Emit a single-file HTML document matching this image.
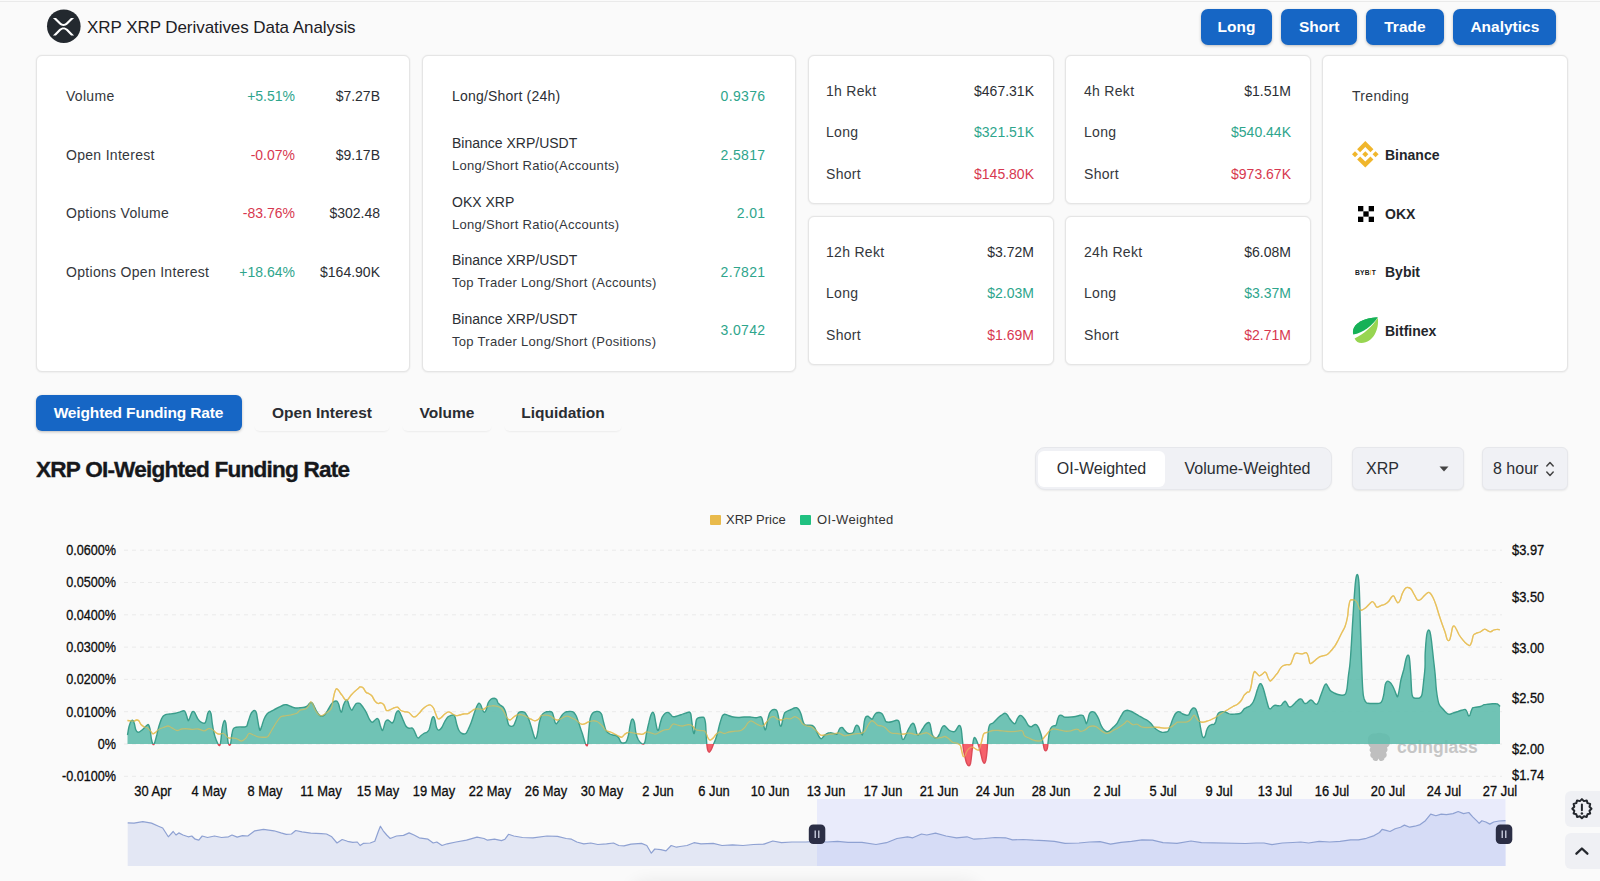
<!DOCTYPE html>
<html lang="en">
<head>
<meta charset="utf-8">
<title>XRP Derivatives Data Analysis</title>
<style>
*{box-sizing:border-box;margin:0;padding:0}
html,body{width:1600px;height:881px;overflow:hidden;background:#fafafa}
body{position:relative;font-family:"Liberation Sans",Arial,sans-serif;color:#23262b;font-size:14px}
.abs{position:absolute}
.t{position:absolute;white-space:nowrap;line-height:20px;height:20px;font-size:14px;color:#2b2e33}
.r{text-align:right}
.g{color:#2ea58c}
.rd{color:#d7384f}
.card{position:absolute;background:#fff;border:1px solid #e5e5e5;border-radius:6px;box-shadow:0 0 2px rgba(0,0,0,.07),0 1px 2px rgba(0,0,0,.03)}
.btn{position:absolute;top:8.5px;height:36px;border-radius:7px;background:#1666c5;color:#fff;font-weight:700;font-size:15.5px;line-height:36px;text-align:center;box-shadow:0 1px 3px rgba(0,0,0,.25)}
.s{font-size:13px;color:#3d4046}
.b{font-weight:700;font-size:14px;color:#23262b}
.w{letter-spacing:.3px;color:#34373c}
.w2{letter-spacing:.2px}
.tab{position:absolute;top:395px;height:36px;line-height:36px;text-align:center;font-weight:700;font-size:15.5px;color:#2a2d32;border-radius:6px;box-shadow:0 2px 2px -1px rgba(0,0,0,.06)}
.ax{position:absolute;white-space:nowrap;font-size:14px;line-height:16px;height:16px;color:#0d0d0d;-webkit-text-stroke:.3px #0d0d0d}
</style>
</head>
<body>
<div class="abs" style="left:0;top:.5px;width:1600px;height:1.8px;background:#eaeaea"></div>
<!-- header -->
<svg class="abs" style="left:46px;top:9px" width="35" height="35" viewBox="0 0 35 35"><circle cx="17.8" cy="17.2" r="16.8" fill="#23292f"/><g transform="translate(6.900 8.900) scale(.0414)" fill="#fff"><path d="M437 0h74L357 152.480c-55.770 55.190-146.190 55.190-202 0L.94 0H75L192 115.830a91.110 91.110 0 0 0 127.910 0z"/><path d="M74.050 424H0L155 270.580c55.770-55.190 146.190-55.190 202 0L512 424H438L320 307.230a91.110 91.110 0 0 0-127.910 0z"/></g></svg>
<div class="t" id="title" style="left:87px;top:17.7px;font-size:17px;color:#1d2025;letter-spacing:-.06px">XRP XRP Derivatives Data Analysis</div>
<div class="btn" style="left:1201px;width:71px">Long</div>
<div class="btn" style="left:1281.3px;width:75.7px">Short</div>
<div class="btn" style="left:1366.2px;width:77.5px">Trade</div>
<div class="btn" style="left:1453.2px;width:103.3px">Analytics</div>

<!-- card 1 -->
<div class="card" style="left:36px;top:55px;width:374px;height:317px"></div>
<div class="t w" style="left:66px;top:86px">Volume</div>
<div class="t r g" style="left:195px;width:100px;top:86px">+5.51%</div>
<div class="t r" style="left:280px;width:100px;top:86px">$7.27B</div>
<div class="t w" style="left:66px;top:145px">Open Interest</div>
<div class="t r rd" style="left:195px;width:100px;top:145px">-0.07%</div>
<div class="t r" style="left:280px;width:100px;top:145px">$9.17B</div>
<div class="t w" style="left:66px;top:203px">Options Volume</div>
<div class="t r rd" style="left:195px;width:100px;top:203px">-83.76%</div>
<div class="t r" style="left:280px;width:100px;top:203px">$302.48</div>
<div class="t w" style="left:66px;top:262px">Options Open Interest</div>
<div class="t r g" style="left:195px;width:100px;top:262px">+18.64%</div>
<div class="t r" style="left:280px;width:100px;top:262px">$164.90K</div>

<!-- card 2 -->
<div class="card" style="left:422px;top:55px;width:374px;height:317px"></div>
<div class="t w2" style="left:452px;top:86px">Long/Short (24h)</div>
<div class="t r g" style="left:666px;width:100px;top:86px;letter-spacing:.35px;margin-left:-.5px">0.9376</div>
<div class="t" style="left:452px;top:133px">Binance XRP/USDT</div>
<div class="t s w" style="left:452px;top:156px">Long/Short Ratio(Accounts)</div>
<div class="t r g" style="left:666px;width:100px;top:145px;letter-spacing:.35px;margin-left:-.5px">2.5817</div>
<div class="t" style="left:452px;top:192px">OKX XRP</div>
<div class="t s w" style="left:452px;top:215px">Long/Short Ratio(Accounts)</div>
<div class="t r g" style="left:666px;width:100px;top:203px;letter-spacing:.35px;margin-left:-.5px">2.01</div>
<div class="t" style="left:452px;top:250px">Binance XRP/USDT</div>
<div class="t s w" style="left:452px;top:273px">Top Trader Long/Short (Accounts)</div>
<div class="t r g" style="left:666px;width:100px;top:262px;letter-spacing:.35px;margin-left:-.5px">2.7821</div>
<div class="t" style="left:452px;top:309px">Binance XRP/USDT</div>
<div class="t s w" style="left:452px;top:332px">Top Trader Long/Short (Positions)</div>
<div class="t r g" style="left:666px;width:100px;top:320px;letter-spacing:.35px;margin-left:-.5px">3.0742</div>

<!-- rekt cards -->
<div class="card" style="left:808px;top:55px;width:246px;height:149px"></div>
<div class="t w" style="left:826px;top:80.5px">1h Rekt</div><div class="t r" style="left:934px;width:100px;top:80.5px">$467.31K</div>
<div class="t w" style="left:826px;top:122px">Long</div><div class="t r g" style="left:934px;width:100px;top:122px">$321.51K</div>
<div class="t w" style="left:826px;top:164px">Short</div><div class="t r rd" style="left:934px;width:100px;top:164px">$145.80K</div>

<div class="card" style="left:1065px;top:55px;width:246px;height:149px"></div>
<div class="t w" style="left:1084px;top:80.5px">4h Rekt</div><div class="t r" style="left:1191px;width:100px;top:80.5px">$1.51M</div>
<div class="t w" style="left:1084px;top:122px">Long</div><div class="t r g" style="left:1191px;width:100px;top:122px">$540.44K</div>
<div class="t w" style="left:1084px;top:164px">Short</div><div class="t r rd" style="left:1191px;width:100px;top:164px">$973.67K</div>

<div class="card" style="left:808px;top:216px;width:246px;height:149px"></div>
<div class="t w" style="left:826px;top:241.5px">12h Rekt</div><div class="t r" style="left:934px;width:100px;top:241.5px">$3.72M</div>
<div class="t w" style="left:826px;top:283px">Long</div><div class="t r g" style="left:934px;width:100px;top:283px">$2.03M</div>
<div class="t w" style="left:826px;top:325px">Short</div><div class="t r rd" style="left:934px;width:100px;top:325px">$1.69M</div>

<div class="card" style="left:1065px;top:216px;width:246px;height:149px"></div>
<div class="t w" style="left:1084px;top:241.5px">24h Rekt</div><div class="t r" style="left:1191px;width:100px;top:241.5px">$6.08M</div>
<div class="t w" style="left:1084px;top:283px">Long</div><div class="t r g" style="left:1191px;width:100px;top:283px">$3.37M</div>
<div class="t w" style="left:1084px;top:325px">Short</div><div class="t r rd" style="left:1191px;width:100px;top:325px">$2.71M</div>

<!-- trending -->
<div class="card" style="left:1322px;top:55px;width:246px;height:317px"></div>
<div class="t w" style="left:1352px;top:86px">Trending</div>
<svg class="abs" style="left:1352.2px;top:141.4px" width="26.6" height="26.6" viewBox="0 0 126.61 126.61"><g fill="#f0b62c"><path d="M38.73 53.2 63.31 28.62 87.9 53.21 102.2 38.91 63.31 0 24.43 38.9z"/><path d="M0 63.31 14.3 49 28.6 63.31 14.3 77.61z"/><path d="M38.73 73.41 63.31 98 87.9 73.4 102.21 87.69 63.31 126.61 24.43 87.73z"/><path d="M98.01 63.31 112.31 49 126.61 63.31 112.31 77.61z"/><path d="M77.82 63.3 63.31 48.78 48.8 63.28 63.31 77.82z"/></g></svg>
<div class="t b" style="left:1385px;top:145px">Binance</div>
<svg class="abs" style="left:1358px;top:206px" width="16" height="16" viewBox="0 0 15 15"><g fill="#000"><rect x="0" y="0" width="5" height="5"/><rect x="10" y="0" width="5" height="5"/><rect x="5" y="5" width="5" height="5"/><rect x="0" y="10" width="5" height="5"/><rect x="10" y="10" width="5" height="5"/></g></svg>
<div class="t b" style="left:1385px;top:203.5px">OKX</div>
<div class="t" style="left:1355px;top:263px;font-size:7.8px;font-weight:700;letter-spacing:.2px;color:#16181c;transform:scaleX(.86);transform-origin:0 50%">BYB<span style="color:#f7a600;font-weight:400">I</span>T</div>
<div class="t b" style="left:1385px;top:262px">Bybit</div>
<svg class="abs" style="left:1352px;top:316px" width="28" height="28" viewBox="0 0 28 28"><path d="M1 14.5 C2.5 7 12 1.6 25.8 1.2 C19 5 9 12 1 14.5 Z" fill="#16b157"/><path d="M2.6 22.4 C11 19 21 10 25.8 1.8 C27.4 13 21.5 26.8 9.4 27 C6.4 27 4 25.4 2.6 22.4 Z" fill="#97d551"/><path d="M1 14.5 C2.5 7 12 1.6 25.8 1.2 C21 9 11 17 1.2 18.6 C0.9 17.2 0.8 15.8 1 14.5 Z" fill="#16b157"/></svg>
<div class="t b" style="left:1385px;top:321px">Bitfinex</div>
<!-- tabs -->
<div class="tab" style="left:35.500px;width:206px;background:#1666c5;color:#fff;letter-spacing:-.15px;box-shadow:0 1px 3px rgba(0,0,0,.25)">Weighted Funding Rate</div>
<div class="tab" style="left:254px;width:136px">Open Interest</div>
<div class="tab" style="left:402px;width:90px">Volume</div>
<div class="tab" style="left:504px;width:118px">Liquidation</div>

<div class="t" id="ctitle" style="left:36px;top:456.2px;height:28px;line-height:28px;font-size:22.6px;font-weight:700;color:#16181c;letter-spacing:-.8px;-webkit-text-stroke:.35px #16181c">XRP OI-Weighted Funding Rate</div>

<!-- toggle group -->
<div class="abs" style="left:1035px;top:447px;width:297px;height:43px;border-radius:10px;background:#f0f1f5;border:1px solid #e6e7eb;box-shadow:0 1px 2px rgba(0,0,0,.06)"></div>
<div class="abs" style="left:1038px;top:451px;width:127px;height:36px;border-radius:6px;background:#fff"></div>
<div class="t" style="left:1038px;width:127px;top:459px;text-align:center;font-size:16px;color:#2b2e33">OI-Weighted</div>
<div class="t" style="left:1165px;width:165px;top:459px;text-align:center;font-size:16px;color:#2b2e33">Volume-Weighted</div>
<div class="abs" style="left:1352px;top:447px;width:112px;height:43px;border-radius:6px;background:#f0f1f5;border:1px solid #e6e7eb;box-shadow:0 1px 2px rgba(0,0,0,.08)"></div>
<div class="t" style="left:1366px;top:459px;font-size:16px;color:#2b2e33">XRP</div>
<svg class="abs" style="left:1439px;top:466px" width="10" height="6" viewBox="0 0 10 6"><path d="M0.5 0.5 L9.5 0.5 L5 5.5 Z" fill="#444"/></svg>
<div class="abs" style="left:1482px;top:447px;width:86px;height:43px;border-radius:6px;background:#f0f1f5;border:1px solid #e6e7eb;box-shadow:0 1px 2px rgba(0,0,0,.08)"></div>
<div class="t" style="left:1493px;top:459px;font-size:16px;color:#2b2e33">8 hour</div>
<svg class="abs" style="left:1545px;top:460px" width="10" height="18" viewBox="0 0 10 18"><path d="M1.8 6 L5 2.6 L8.2 6 M1.8 12 L5 15.4 L8.2 12" fill="none" stroke="#444" stroke-width="1.5" stroke-linecap="round" stroke-linejoin="round"/></svg>

<!-- legend -->
<div class="abs" style="left:709.700px;top:514.700px;width:11px;height:10.500px;background:#e9ba4b;border-radius:1px"></div>
<div class="t" style="left:726px;top:509.900px;font-size:13px;color:#333">XRP Price</div>
<div class="abs" style="left:800px;top:514.700px;width:11px;height:10.500px;background:#20c080;border-radius:1px"></div>
<div class="t" style="left:817px;top:509.900px;font-size:13px;color:#333;letter-spacing:.35px">OI-Weighted</div>
<svg class="abs" style="left:0;top:0" width="1600" height="881" viewBox="0 0 1600 881">
<defs><clipPath id="cu"><rect x="0" y="500" width="1600" height="244.0"/></clipPath><clipPath id="cd"><rect x="0" y="744.0" width="1600" height="100"/></clipPath></defs>
<line x1="124" x2="1502" y1="550.2" y2="550.2" stroke="#eaeaea" stroke-width="1" stroke-dasharray="4 4"/>
<line x1="124" x2="1502" y1="582.5" y2="582.5" stroke="#eaeaea" stroke-width="1" stroke-dasharray="4 4"/>
<line x1="124" x2="1502" y1="614.8" y2="614.8" stroke="#eaeaea" stroke-width="1" stroke-dasharray="4 4"/>
<line x1="124" x2="1502" y1="647.1" y2="647.1" stroke="#eaeaea" stroke-width="1" stroke-dasharray="4 4"/>
<line x1="124" x2="1502" y1="679.4" y2="679.4" stroke="#eaeaea" stroke-width="1" stroke-dasharray="4 4"/>
<line x1="124" x2="1502" y1="711.7" y2="711.7" stroke="#eaeaea" stroke-width="1" stroke-dasharray="4 4"/>
<line x1="124" x2="1502" y1="744.0" y2="744.0" stroke="#eaeaea" stroke-width="1" stroke-dasharray="4 4"/>
<line x1="124" x2="1502" y1="776.3" y2="776.3" stroke="#eaeaea" stroke-width="1" stroke-dasharray="4 4"/>
<g><path d="M1368 739C1368 735 1372 733 1376 733.5C1378 732.5 1381 732.5 1383 733.5C1387 733.5 1390.5 736 1390 740C1390.5 744 1389 746.5 1387 747.5C1388 749.500 1387.500 751.500 1386 752.500C1387.500 755 1386.500 757.500 1384.500 758C1384.500 760.500 1381.500 762 1379.500 760.500L1378.500 758.500L1377.500 760.500C1375.500 762 1372.500 760.500 1372.500 758C1370.500 757.500 1369.500 755 1371 752.500C1369.500 751.500 1369 749.500 1370.500 747.500C1368.500 746 1367.500 743 1368 739Z" fill="#bfbfbf"/><text x="1397" y="752.5" font-family="Liberation Sans,Arial,sans-serif" font-weight="700" font-size="17.5" fill="#c6c6c6">coinglass</text></g>
<defs><path id="yp" d="M127.5 720.5C128.0 720.5 129.5 720.6 130.5 720.8C131.5 720.9 132.5 721.3 133.5 721.2C134.5 721.1 135.6 720.1 136.5 720.0C137.4 719.9 138.0 720.0 138.8 720.8C139.5 721.5 140.1 723.5 141.0 724.5C141.9 725.5 143.0 726.2 144.0 726.8C145.0 727.2 146.0 726.9 147.0 727.5C148.0 728.1 149.0 729.5 150.0 730.5C151.0 731.5 152.0 733.5 153.0 733.8C154.0 734.0 155.0 732.8 156.0 732.0C157.0 731.2 157.8 730.0 159.0 729.3C160.2 728.5 162.0 728.0 163.5 727.5C165.0 727.0 166.6 726.0 168.0 726.0C169.4 726.0 170.2 727.0 171.8 727.8C173.2 728.5 175.4 730.3 177.0 730.5C178.6 730.7 180.0 729.3 181.5 729.0C183.0 728.7 184.2 728.7 186.0 728.7C187.8 728.8 190.0 729.2 192.0 729.3C194.0 729.3 196.0 728.8 198.0 729.0C200.0 729.2 202.2 730.8 204.0 730.8C205.8 730.8 207.2 729.0 208.5 728.7C209.8 728.4 210.2 728.3 211.5 729.0C212.8 729.7 214.8 731.9 216.0 732.8C217.2 733.6 217.8 734.1 219.0 734.2C220.2 734.4 222.0 732.9 223.5 733.5C225.0 734.1 226.5 737.0 228.0 737.7C229.5 738.5 231.0 737.8 232.5 738.0C234.0 738.2 235.5 738.2 237.0 738.8C238.5 739.2 240.0 741.1 241.5 741.0C243.0 740.9 244.8 739.2 246.0 738.0C247.2 736.8 247.8 734.0 249.0 733.5C250.2 733.0 252.0 734.5 253.5 735.0C255.0 735.5 256.2 736.4 258.0 736.8C259.8 737.2 262.4 737.3 264.0 737.2C265.6 737.2 266.5 737.6 267.8 736.5C269.0 735.4 270.1 732.8 271.5 730.5C272.9 728.2 274.5 725.2 276.0 723.0C277.5 720.8 279.0 718.2 280.5 717.0C282.0 715.8 283.2 716.2 285.0 715.8C286.8 715.4 289.0 715.2 291.0 714.8C293.0 714.3 295.5 714.0 297.0 713.2C298.5 712.5 298.5 711.0 300.0 710.2C301.5 709.5 304.5 709.6 306.0 708.8C307.5 707.9 308.2 706.1 309.0 705.0C309.8 703.9 310.2 702.1 310.8 702.0C311.4 701.9 312.1 703.0 312.8 704.2C313.4 705.5 314.1 707.9 315.0 709.5C315.9 711.1 316.9 713.0 318.0 714.0C319.1 715.0 320.2 716.0 321.8 715.8C323.2 715.5 325.4 713.8 327.0 712.5C328.6 711.2 330.4 710.8 331.5 708.0C332.6 705.2 333.0 699.1 333.8 696.0C334.5 692.9 335.2 690.2 336.0 689.2C336.8 688.2 337.2 689.0 338.2 690.0C339.2 691.0 340.6 693.5 342.0 695.2C343.4 697.0 345.0 700.5 346.5 700.5C348.0 700.5 349.5 696.9 351.0 695.2C352.5 693.6 354.2 691.9 355.5 690.8C356.8 689.6 357.8 688.8 358.5 688.2C359.2 687.6 359.2 687.1 360.0 687.0C360.8 686.9 362.0 686.9 363.0 687.8C364.0 688.6 365.0 691.2 366.0 692.2C367.0 693.2 368.0 693.1 369.0 693.8C370.0 694.4 371.0 694.8 372.0 696.0C373.0 697.2 374.0 700.0 375.0 701.2C376.0 702.5 377.0 703.2 378.0 703.5C379.0 703.8 380.0 702.5 381.0 702.8C382.0 703.0 383.1 703.8 384.0 705.0C384.9 706.2 385.4 709.4 386.2 710.2C387.1 711.1 388.1 710.6 389.2 710.2C390.4 709.9 391.6 708.8 393.0 708.3C394.4 707.8 396.2 706.9 397.5 707.2C398.8 707.6 399.2 709.5 400.5 710.2C401.8 711.0 403.6 711.4 405.0 711.8C406.4 712.1 407.5 711.8 408.8 712.5C410.0 713.2 411.4 715.5 412.5 716.2C413.6 717.0 414.4 717.2 415.5 716.7C416.6 716.2 418.0 714.6 419.2 713.2C420.5 711.9 421.6 710.0 423.0 708.8C424.4 707.5 426.2 706.1 427.5 705.5C428.8 704.8 429.5 704.6 430.5 705.0C431.5 705.4 432.6 706.5 433.5 708.0C434.4 709.5 435.0 712.2 435.8 714.0C436.5 715.8 437.1 718.2 438.0 718.8C438.9 719.4 439.9 718.5 441.0 717.8C442.1 717.0 443.5 715.0 444.8 714.0C446.0 713.0 447.4 711.9 448.5 711.8C449.6 711.6 450.4 712.6 451.5 713.2C452.6 713.9 454.0 715.2 455.2 715.5C456.5 715.8 457.6 715.5 459.0 715.2C460.4 715.0 462.0 714.2 463.5 714.0C465.0 713.8 466.6 714.2 468.0 713.7C469.4 713.2 470.6 711.8 471.8 711.0C472.9 710.2 473.6 709.6 474.8 709.2C475.9 708.8 477.1 708.7 478.5 708.8C479.9 708.8 481.5 709.9 483.0 709.5C484.5 709.1 486.0 707.1 487.5 706.5C489.0 705.9 490.5 705.8 492.0 705.8C493.5 705.7 495.0 705.8 496.5 706.2C498.0 706.6 499.8 707.1 501.0 708.0C502.2 708.9 503.0 710.1 504.0 711.8C505.0 713.4 506.0 716.4 507.0 717.8C508.0 719.1 508.9 720.1 510.0 720.0C511.1 719.9 512.5 717.9 513.8 717.0C515.0 716.1 516.1 715.1 517.5 714.8C518.9 714.4 520.5 714.4 522.0 714.8C523.5 715.1 525.0 716.0 526.5 716.7C528.0 717.5 529.6 718.6 531.0 719.2C532.4 719.9 533.5 720.8 534.8 720.8C536.0 720.8 537.4 720.1 538.5 719.2C539.6 718.4 540.2 716.2 541.5 715.5C542.8 714.8 544.5 715.1 546.0 715.2C547.5 715.3 549.0 715.6 550.5 716.2C552.0 716.9 553.8 718.6 555.0 719.2C556.2 719.9 556.8 720.2 558.0 720.0C559.2 719.8 561.0 718.4 562.5 717.8C564.0 717.1 565.5 716.2 567.0 716.2C568.5 716.2 570.0 717.1 571.5 717.8C573.0 718.4 574.5 719.0 576.0 720.0C577.5 721.0 579.2 723.0 580.5 723.8C581.8 724.5 582.2 724.5 583.5 724.2C584.8 724.0 586.5 722.8 588.0 722.2C589.5 721.7 591.0 720.9 592.5 720.8C594.0 720.6 595.8 721.0 597.0 721.5C598.2 722.0 599.0 722.9 600.0 723.8C601.0 724.6 602.0 725.6 603.0 726.8C604.0 727.9 604.8 729.6 606.0 730.5C607.2 731.4 609.1 731.5 610.5 732.0C611.9 732.5 613.0 733.2 614.2 733.8C615.5 734.4 616.8 735.2 618.0 735.8C619.2 736.3 620.6 737.5 621.8 737.2C622.9 737.0 623.6 735.1 624.8 734.2C625.9 733.4 627.1 732.5 628.5 732.3C629.9 732.0 631.5 732.5 633.0 732.8C634.5 733.0 635.9 733.5 637.5 733.8C639.1 734.0 641.2 734.5 642.8 734.2C644.2 734.0 645.1 732.2 646.5 732.0C647.9 731.8 649.5 732.4 651.0 732.8C652.5 733.1 654.0 734.4 655.5 734.2C657.0 734.1 658.5 732.8 660.0 732.0C661.5 731.2 663.0 730.2 664.5 729.8C666.0 729.3 667.9 729.9 669.0 729.3C670.1 728.7 670.5 726.9 671.2 726.0C672.0 725.1 672.4 723.9 673.5 723.8C674.6 723.6 676.5 724.9 678.0 725.2C679.5 725.6 681.0 726.1 682.5 726.0C684.0 725.9 685.5 724.9 687.0 724.8C688.5 724.7 690.0 724.4 691.5 725.2C693.0 726.1 694.5 728.9 696.0 729.8C697.5 730.6 699.0 730.2 700.5 730.5C702.0 730.8 703.8 730.0 705.0 731.2C706.2 732.5 707.1 736.5 708.0 738.0C708.9 739.5 709.4 740.2 710.2 740.2C711.1 740.2 712.2 739.0 713.2 738.0C714.2 737.0 715.1 735.2 716.2 734.2C717.4 733.2 718.6 732.1 720.0 732.0C721.4 731.9 723.0 733.5 724.5 733.5C726.0 733.5 727.2 732.4 729.0 732.0C730.8 731.6 733.0 731.5 735.0 731.2C737.0 731.0 739.4 731.1 741.0 730.5C742.6 729.9 743.6 728.8 744.8 727.5C745.9 726.2 746.8 724.1 747.8 723.0C748.8 721.9 749.6 720.8 750.8 720.8C751.9 720.7 753.1 722.0 754.5 722.7C755.9 723.5 757.6 724.7 759.0 725.2C760.4 725.8 761.5 726.5 762.8 726.0C764.0 725.5 765.2 723.6 766.5 722.2C767.8 720.9 769.0 718.7 770.2 717.8C771.5 716.8 772.8 716.5 774.0 716.7C775.2 717.0 776.5 718.7 777.8 719.2C779.0 719.8 780.1 720.1 781.5 720.0C782.9 719.9 784.5 718.7 786.0 718.5C787.5 718.3 789.0 719.1 790.5 718.8C792.0 718.5 793.5 716.6 795.0 716.7C796.5 716.8 798.2 718.1 799.5 719.2C800.8 720.4 801.2 722.6 802.5 723.8C803.8 724.9 805.5 725.5 807.0 726.0C808.5 726.5 810.0 726.0 811.5 726.8C813.0 727.5 814.5 729.1 816.0 730.5C817.5 731.9 819.0 734.2 820.5 735.0C822.0 735.8 823.5 735.1 825.0 735.0C826.5 734.9 828.0 734.5 829.5 734.2C831.0 734.0 832.5 734.0 834.0 733.8C835.5 733.6 837.5 733.1 838.5 733.0C839.5 733.0 839.0 733.0 840.0 733.5C841.0 734.0 843.0 735.5 844.5 735.8C846.0 736.0 847.2 735.3 849.0 735.0C850.8 734.7 853.0 734.0 855.0 733.8C857.0 733.5 859.4 733.9 861.0 733.5C862.6 733.1 863.5 732.8 864.8 731.2C866.0 729.8 867.4 726.2 868.5 724.5C869.6 722.8 870.5 721.1 871.5 720.8C872.5 720.4 873.5 721.5 874.5 722.2C875.5 723.0 876.2 724.6 877.5 725.2C878.8 725.9 880.8 725.6 882.0 726.0C883.2 726.4 884.0 726.8 885.0 727.5C886.0 728.2 886.9 729.5 888.0 730.5C889.1 731.5 890.2 732.7 891.8 733.2C893.2 733.7 895.1 733.3 897.0 733.5C898.9 733.7 901.2 734.3 903.0 734.2C904.8 734.2 906.0 733.3 907.5 733.2C909.0 733.1 910.5 733.2 912.0 733.5C913.5 733.8 914.9 734.7 916.5 734.7C918.1 734.8 920.0 734.1 921.8 733.8C923.5 733.5 925.4 732.4 927.0 732.8C928.6 733.1 930.0 734.9 931.5 735.8C933.0 736.6 934.5 737.7 936.0 738.0C937.5 738.3 939.0 738.0 940.5 737.7C942.0 737.5 943.6 736.3 945.0 736.5C946.4 736.7 947.5 737.8 948.8 738.8C950.0 739.7 951.1 741.5 952.5 742.2C953.9 743.0 955.8 742.8 957.0 743.2C958.2 743.7 959.2 743.6 960.0 744.8C960.8 745.9 961.0 748.1 961.5 750.0C962.0 751.9 962.5 755.0 963.0 756.0C963.5 757.0 964.2 756.8 964.8 756.0C965.4 755.2 966.0 752.8 966.8 751.5C967.5 750.2 968.1 749.2 969.0 748.5C969.9 747.8 971.0 747.0 972.0 747.0C973.0 747.0 973.9 748.0 975.0 748.5C976.1 749.0 977.8 750.8 978.8 750.0C979.8 749.2 980.2 746.5 981.0 744.0C981.8 741.5 982.5 736.9 983.2 735.0C984.0 733.1 984.6 733.2 985.5 732.8C986.4 732.2 987.2 732.4 988.5 732.0C989.8 731.6 991.2 730.8 993.0 730.5C994.8 730.2 997.0 730.4 999.0 730.5C1001.0 730.6 1003.0 731.0 1005.0 731.2C1007.0 731.5 1009.0 731.7 1011.0 731.7C1013.0 731.7 1015.1 731.4 1017.0 731.2C1018.9 731.1 1021.0 730.0 1022.2 730.8C1023.5 731.5 1023.4 734.5 1024.5 735.8C1025.6 737.0 1027.5 737.2 1029.0 738.0C1030.5 738.8 1032.0 739.8 1033.5 740.2C1035.0 740.8 1036.6 741.0 1038.0 741.0C1039.4 741.0 1040.5 741.1 1041.8 740.2C1043.0 739.4 1044.2 737.2 1045.5 735.8C1046.8 734.2 1048.0 732.4 1049.2 731.2C1050.5 730.1 1051.4 729.2 1053.0 729.0C1054.6 728.8 1057.0 729.4 1059.0 729.8C1061.0 730.1 1063.0 731.1 1065.0 731.2C1067.0 731.4 1069.2 731.1 1071.0 730.8C1072.8 730.5 1074.2 729.5 1075.5 729.3C1076.8 729.1 1077.8 729.3 1078.5 729.6C1079.2 729.9 1079.0 731.1 1080.0 731.2C1081.0 731.4 1083.0 731.0 1084.5 730.2C1086.0 729.5 1087.6 727.5 1089.0 726.8C1090.4 726.0 1091.5 726.0 1092.8 726.0C1094.0 726.0 1095.1 726.0 1096.5 726.8C1097.9 727.5 1099.5 729.4 1101.0 730.5C1102.5 731.6 1104.1 732.8 1105.5 733.2C1106.9 733.6 1108.0 733.2 1109.2 732.8C1110.5 732.3 1111.6 731.2 1113.0 730.5C1114.4 729.8 1116.0 729.1 1117.5 728.2C1119.0 727.4 1120.8 726.1 1122.0 725.2C1123.2 724.4 1124.1 723.8 1125.0 723.0C1125.9 722.2 1126.4 720.8 1127.2 720.8C1128.1 720.8 1129.2 722.3 1130.2 723.0C1131.2 723.7 1132.1 724.6 1133.2 724.8C1134.4 725.0 1135.6 723.9 1137.0 724.2C1138.4 724.5 1139.8 726.2 1141.5 726.8C1143.2 727.3 1145.5 727.4 1147.5 727.5C1149.5 727.6 1151.5 727.2 1153.5 727.2C1155.5 727.2 1157.5 727.3 1159.5 727.5C1161.5 727.7 1163.8 728.2 1165.5 728.2C1167.2 728.2 1168.5 728.1 1170.0 727.5C1171.5 726.9 1173.2 725.4 1174.5 724.5C1175.8 723.6 1176.2 722.6 1177.5 722.2C1178.8 721.9 1180.4 722.3 1182.0 722.2C1183.6 722.2 1185.8 722.3 1187.2 721.8C1188.8 721.3 1189.9 720.4 1191.0 719.2C1192.1 718.1 1193.1 715.5 1194.0 715.2C1194.9 715.0 1195.5 716.8 1196.2 717.8C1197.0 718.7 1197.6 720.0 1198.5 720.8C1199.4 721.5 1200.2 722.1 1201.5 722.2C1202.8 722.4 1204.5 721.9 1206.0 721.5C1207.5 721.1 1209.0 720.6 1210.5 720.0C1212.0 719.4 1213.5 718.6 1215.0 717.8C1216.5 716.9 1218.0 715.8 1219.5 714.8C1221.0 713.8 1222.5 712.7 1224.0 711.8C1225.5 710.8 1227.0 710.1 1228.5 709.2C1230.0 708.3 1231.5 707.3 1233.0 706.5C1234.5 705.7 1236.1 705.2 1237.5 704.2C1238.9 703.2 1240.1 702.0 1241.2 700.5C1242.4 699.0 1243.2 696.6 1244.2 695.2C1245.2 693.9 1246.4 692.9 1247.2 692.2C1248.1 691.6 1248.8 692.6 1249.5 691.5C1250.2 690.4 1250.8 688.0 1251.3 685.5C1251.8 683.0 1252.3 678.8 1252.8 676.5C1253.3 674.2 1253.7 672.3 1254.3 671.7C1254.9 671.1 1255.4 672.1 1256.2 672.8C1257.1 673.4 1258.2 675.5 1259.2 675.8C1260.2 676.0 1261.4 674.9 1262.2 674.2C1263.1 673.6 1263.8 672.2 1264.5 672.0C1265.2 671.8 1265.7 672.2 1266.3 673.2C1266.9 674.2 1267.6 676.7 1268.2 678.0C1268.9 679.3 1269.5 680.9 1270.2 681.0C1271.0 681.1 1271.7 679.9 1272.8 678.8C1273.8 677.6 1275.6 675.3 1276.5 674.2C1277.4 673.2 1277.4 673.2 1278.0 672.3C1278.6 671.4 1279.2 669.8 1280.0 668.8C1280.8 667.7 1281.9 666.4 1283.0 665.8C1284.1 665.1 1285.5 665.0 1286.8 664.7C1288.0 664.5 1289.5 665.2 1290.5 664.2C1291.5 663.3 1292.0 660.8 1292.8 659.0C1293.5 657.2 1294.1 654.7 1295.0 653.8C1295.9 652.8 1296.8 653.3 1298.0 653.3C1299.2 653.3 1301.1 653.9 1302.5 653.8C1303.9 653.6 1305.3 652.3 1306.2 652.7C1307.2 653.1 1307.6 654.3 1308.2 656.0C1308.8 657.7 1309.2 661.5 1309.7 662.8C1310.2 664.0 1310.6 663.6 1311.5 663.2C1312.4 662.8 1314.0 661.2 1315.2 660.2C1316.5 659.2 1317.6 658.0 1319.0 657.2C1320.4 656.5 1322.1 656.2 1323.5 655.7C1324.9 655.2 1326.0 655.3 1327.2 654.5C1328.5 653.7 1329.8 652.1 1331.0 650.8C1332.2 649.4 1333.5 648.1 1334.8 646.2C1336.0 644.4 1337.2 641.9 1338.5 639.5C1339.8 637.1 1341.1 634.2 1342.2 632.0C1343.4 629.8 1344.4 628.5 1345.2 626.0C1346.1 623.5 1346.9 620.2 1347.5 617.0C1348.1 613.8 1348.2 609.2 1348.7 606.5C1349.2 603.8 1349.5 601.6 1350.2 600.5C1350.9 599.4 1352.0 599.8 1352.8 599.8C1353.5 599.7 1354.2 599.7 1355.0 600.2C1355.8 600.7 1356.5 601.3 1357.2 602.8C1358.0 604.2 1358.8 607.5 1359.5 608.8C1360.2 610.0 1360.8 610.4 1361.8 610.2C1362.8 610.1 1364.2 609.0 1365.5 608.0C1366.8 607.0 1368.1 605.3 1369.2 604.2C1370.4 603.2 1371.4 601.8 1372.2 601.7C1373.1 601.6 1373.8 602.6 1374.5 603.5C1375.2 604.4 1375.8 606.9 1376.8 607.2C1377.8 607.6 1379.1 606.2 1380.5 605.8C1381.9 605.2 1383.6 605.0 1385.0 604.2C1386.4 603.5 1387.6 602.5 1388.8 601.2C1389.9 600.0 1390.9 597.6 1391.8 596.8C1392.6 595.9 1393.0 595.5 1393.7 596.0C1394.4 596.5 1395.1 598.6 1395.8 599.8C1396.5 600.9 1397.0 602.6 1397.8 602.8C1398.5 602.9 1399.2 602.0 1400.0 600.5C1400.8 599.0 1401.4 595.8 1402.2 593.8C1403.1 591.8 1404.2 589.5 1405.2 588.5C1406.2 587.5 1407.2 587.3 1408.2 587.5C1409.2 587.6 1410.2 588.1 1411.2 589.2C1412.2 590.4 1413.2 592.8 1414.2 594.5C1415.2 596.2 1416.2 598.9 1417.2 599.8C1418.2 600.6 1419.1 600.4 1420.2 599.8C1421.4 599.1 1422.8 597.2 1424.0 596.0C1425.2 594.8 1426.8 593.2 1427.8 592.7C1428.8 592.2 1429.1 592.2 1430.0 593.0C1430.9 593.8 1432.0 595.5 1433.0 597.5C1434.0 599.5 1435.0 602.1 1436.0 605.0C1437.0 607.9 1438.0 611.6 1439.0 614.8C1440.0 617.9 1441.0 620.9 1442.0 623.8C1443.0 626.6 1444.1 629.4 1445.0 632.0C1445.9 634.6 1446.5 638.1 1447.2 639.5C1448.0 640.9 1448.9 641.0 1449.5 640.2C1450.1 639.5 1450.5 637.1 1451.0 635.0C1451.5 632.9 1452.0 629.0 1452.5 627.5C1453.0 626.0 1453.7 625.8 1454.3 626.0C1454.9 626.2 1455.4 627.5 1456.2 629.0C1457.1 630.5 1458.1 633.1 1459.2 635.0C1460.4 636.9 1461.8 638.8 1463.0 640.2C1464.2 641.8 1465.6 643.1 1466.8 644.0C1467.9 644.9 1468.9 645.9 1469.8 645.5C1470.6 645.1 1471.1 643.5 1471.7 641.8C1472.3 640.0 1472.7 636.4 1473.5 635.0C1474.3 633.6 1475.4 633.7 1476.5 633.2C1477.6 632.7 1479.1 632.6 1480.2 632.0C1481.4 631.4 1482.4 630.2 1483.2 629.8C1484.1 629.3 1484.6 629.0 1485.5 629.3C1486.4 629.5 1487.6 630.9 1488.5 631.2C1489.4 631.6 1489.9 631.9 1490.8 631.7C1491.6 631.5 1492.8 630.4 1493.8 630.0C1494.8 629.6 1495.8 629.3 1496.8 629.3C1497.8 629.2 1499.2 629.7 1499.8 629.8"/><path id="gp" d="M127.5 735.0C127.8 733.6 128.4 729.0 129.0 726.8C129.6 724.5 130.2 722.6 130.8 721.5C131.4 720.4 132.2 720.0 132.8 720.3C133.3 720.5 133.8 721.4 134.2 723.0C134.8 724.6 135.1 728.2 135.8 729.8C136.4 731.3 137.1 732.1 138.0 732.3C138.9 732.5 140.0 731.5 141.0 730.8C142.0 730.1 143.0 729.2 144.0 728.2C145.0 727.3 146.2 725.8 147.0 725.2C147.8 724.7 148.0 724.2 148.5 724.8C149.0 725.4 149.5 726.5 150.0 729.0C150.5 731.5 151.0 737.0 151.5 739.5C152.0 742.0 152.5 743.7 153.0 744.3C153.5 744.9 153.9 744.8 154.5 743.2C155.1 741.7 156.0 737.9 156.8 735.0C157.5 732.1 158.1 728.9 159.0 726.0C159.9 723.1 161.0 719.6 162.0 717.8C163.0 715.9 163.8 715.4 165.0 714.8C166.2 714.1 167.8 714.2 169.5 714.0C171.2 713.8 173.8 713.6 175.5 713.2C177.2 712.9 178.6 712.2 180.0 711.8C181.4 711.3 182.9 710.7 183.8 710.7C184.6 710.7 184.8 710.8 185.2 711.8C185.8 712.7 186.2 714.8 186.8 716.2C187.2 717.8 187.8 720.5 188.2 720.8C188.8 721.0 189.1 719.2 189.8 717.8C190.4 716.3 191.2 713.2 192.0 712.2C192.8 711.2 193.6 711.3 194.2 711.8C194.9 712.2 195.1 713.5 195.8 714.8C196.4 716.0 197.1 718.0 198.0 719.2C198.9 720.5 199.9 721.6 201.0 722.2C202.1 722.9 203.9 723.4 204.8 723.0C205.6 722.6 205.8 721.6 206.2 720.0C206.8 718.4 207.2 714.8 207.8 713.2C208.3 711.8 209.0 710.9 209.6 711.0C210.1 711.1 210.6 712.0 211.1 714.0C211.5 716.0 211.8 720.0 212.2 723.0C212.7 726.0 213.1 729.2 213.8 732.0C214.4 734.8 215.2 737.5 216.0 739.5C216.8 741.5 217.6 743.3 218.2 744.3C218.9 745.2 219.3 745.8 219.8 745.2C220.2 744.7 220.4 744.0 220.8 741.0C221.2 738.0 221.7 730.9 222.3 727.5C222.9 724.1 223.7 721.5 224.2 720.8C224.8 720.0 225.3 721.1 225.8 723.0C226.2 724.9 226.4 728.9 226.8 732.0C227.2 735.1 227.6 739.5 228.0 741.8C228.4 744.0 229.1 745.0 229.5 745.2C229.9 745.5 230.3 745.0 230.7 743.2C231.1 741.5 231.3 737.4 231.8 735.0C232.2 732.6 232.5 730.3 233.2 729.0C234.0 727.7 235.1 727.6 236.2 727.2C237.4 726.9 238.6 726.9 240.0 726.9C241.4 726.9 243.4 727.2 244.5 727.0C245.6 726.9 246.1 726.9 246.8 726.0C247.4 725.1 247.6 723.4 248.2 721.5C248.9 719.6 249.8 716.5 250.5 714.8C251.2 713.0 252.0 712.0 252.8 711.3C253.5 710.6 254.4 710.4 255.0 710.7C255.6 711.0 256.1 711.7 256.5 713.2C256.9 714.8 257.2 717.5 257.7 720.0C258.1 722.5 258.8 726.5 259.2 728.2C259.6 730.0 259.8 730.6 260.2 730.2C260.7 729.8 261.1 727.8 261.8 726.0C262.4 724.2 263.1 721.2 264.0 719.2C264.9 717.2 266.0 715.2 267.0 714.0C268.0 712.8 268.8 712.5 270.0 711.8C271.2 711.0 273.0 710.2 274.5 709.5C276.0 708.8 277.5 708.0 279.0 707.2C280.5 706.5 282.2 705.4 283.5 705.0C284.8 704.6 285.2 704.5 286.5 704.7C287.8 705.0 289.5 706.0 291.0 706.5C292.5 707.0 294.0 707.8 295.5 708.0C297.0 708.2 298.5 707.8 300.0 707.7C301.5 707.6 303.2 707.6 304.5 707.2C305.8 706.9 306.6 706.4 307.5 705.8C308.4 705.1 309.0 703.7 309.8 703.2C310.5 702.7 311.2 702.2 312.0 702.8C312.8 703.3 313.5 705.1 314.2 706.5C315.0 707.9 315.6 709.5 316.5 711.0C317.4 712.5 318.6 714.3 319.5 715.2C320.4 716.1 320.9 716.3 321.8 716.2C322.6 716.2 323.8 715.8 324.8 714.8C325.8 713.8 326.8 711.9 327.8 710.2C328.8 708.6 329.8 706.4 330.8 705.0C331.8 703.6 332.8 702.3 333.8 701.7C334.8 701.1 335.9 700.8 336.8 701.2C337.6 701.7 338.1 702.8 338.7 704.2C339.3 705.8 339.7 709.0 340.2 710.2C340.7 711.5 341.1 712.6 341.7 711.8C342.2 710.9 342.8 706.9 343.5 705.0C344.2 703.1 345.1 701.1 345.8 700.5C346.4 699.9 347.1 700.2 347.7 701.2C348.3 702.2 348.8 705.0 349.5 706.5C350.2 708.0 351.1 710.1 351.8 710.2C352.4 710.4 352.9 708.4 353.7 707.2C354.4 706.1 355.4 704.2 356.2 703.5C357.1 702.8 357.9 703.2 358.5 703.2C359.1 703.2 359.2 702.8 360.0 703.5C360.8 704.2 362.0 705.9 363.0 707.2C364.0 708.6 365.0 709.9 366.0 711.8C367.0 713.6 368.0 716.8 369.0 718.5C370.0 720.2 371.0 722.0 372.0 722.2C373.0 722.5 374.1 720.6 375.0 720.0C375.9 719.4 376.6 718.5 377.2 718.5C377.9 718.5 378.2 718.9 378.8 720.0C379.2 721.1 379.7 723.5 380.2 725.2C380.8 727.0 381.6 730.1 382.2 730.5C382.8 730.9 383.1 729.0 383.7 727.5C384.2 726.0 384.8 722.8 385.5 721.5C386.2 720.2 387.0 720.0 387.8 720.0C388.5 720.0 389.2 721.0 390.0 721.5C390.8 722.0 391.6 723.2 392.2 723.0C392.9 722.8 393.6 721.6 394.2 720.0C394.8 718.4 395.3 714.8 396.0 713.2C396.7 711.7 397.6 710.7 398.2 710.7C398.9 710.7 399.4 711.8 400.2 713.2C400.9 714.7 401.8 717.1 402.8 719.2C403.7 721.4 404.8 724.5 405.8 726.0C406.8 727.5 407.6 727.9 408.8 728.2C409.9 728.6 411.5 727.6 412.5 728.2C413.5 728.9 414.1 730.6 414.8 732.0C415.4 733.4 416.1 735.5 416.7 736.5C417.3 737.5 417.8 738.1 418.5 738.0C419.2 737.9 419.9 736.5 420.8 735.8C421.6 735.0 422.8 734.1 423.8 733.5C424.8 732.9 425.9 732.9 426.8 732.3C427.6 731.7 428.4 731.0 429.0 729.8C429.6 728.5 430.0 726.4 430.5 724.5C431.0 722.6 431.5 719.8 432.0 718.5C432.5 717.2 433.0 716.5 433.5 716.7C434.0 717.0 434.5 718.2 435.0 720.0C435.5 721.8 435.9 725.8 436.5 727.5C437.1 729.2 437.9 730.2 438.8 730.2C439.6 730.2 440.8 729.0 441.8 727.5C442.8 726.0 443.8 723.2 444.8 721.5C445.8 719.8 446.8 718.0 447.8 717.0C448.8 716.0 449.8 715.8 450.8 715.5C451.8 715.2 453.0 714.8 453.8 715.2C454.5 715.6 454.8 716.2 455.2 717.8C455.8 719.3 456.1 722.4 456.8 724.5C457.4 726.6 458.1 729.0 459.0 730.5C459.9 732.0 460.9 733.0 462.0 733.5C463.1 734.0 464.8 734.1 465.8 733.5C466.8 732.9 467.1 731.5 468.0 729.8C468.9 728.0 470.0 725.6 471.0 723.0C472.0 720.4 473.1 716.8 474.0 714.0C474.9 711.2 475.9 708.3 476.7 706.5C477.5 704.7 478.3 703.5 478.9 703.2C479.6 703.0 480.1 703.8 480.8 705.0C481.4 706.2 482.1 709.0 482.7 710.2C483.3 711.5 483.9 712.3 484.5 712.2C485.1 712.1 485.7 711.1 486.3 709.5C486.9 707.9 487.4 704.5 488.2 702.8C489.1 701.0 490.2 699.8 491.2 699.0C492.2 698.2 493.4 698.2 494.2 698.2C495.1 698.3 495.9 698.5 496.5 699.3C497.1 700.0 497.4 701.8 498.0 702.8C498.6 703.7 499.4 704.2 500.2 705.0C501.1 705.8 502.4 706.1 503.2 707.2C504.1 708.4 504.9 709.9 505.5 711.8C506.1 713.6 506.5 716.4 507.0 718.5C507.5 720.6 507.9 723.2 508.5 724.5C509.1 725.8 509.9 726.2 510.8 726.3C511.6 726.4 512.9 726.3 513.8 725.2C514.6 724.2 515.2 722.0 516.0 720.0C516.8 718.0 517.4 714.6 518.2 713.2C519.1 711.9 520.2 711.9 521.2 711.8C522.2 711.6 523.4 711.7 524.2 712.2C525.1 712.7 525.8 713.6 526.5 714.8C527.2 715.9 528.0 717.4 528.8 719.2C529.5 721.1 530.2 723.6 531.0 726.0C531.8 728.4 532.6 731.5 533.2 733.5C533.9 735.5 534.2 737.2 534.8 738.0C535.2 738.8 535.8 739.0 536.2 738.0C536.8 737.0 537.2 734.5 537.8 732.0C538.2 729.5 538.6 725.8 539.2 723.0C539.9 720.2 540.6 717.2 541.5 715.5C542.4 713.8 543.2 713.2 544.5 712.5C545.8 711.8 547.8 711.5 549.0 711.5C550.2 711.4 551.2 711.4 552.0 712.2C552.8 713.0 553.0 714.6 553.5 716.2C554.0 717.9 554.5 721.0 555.0 722.2C555.5 723.5 555.9 724.0 556.5 723.8C557.1 723.5 557.9 722.1 558.8 720.8C559.6 719.4 560.8 716.9 561.8 715.5C562.8 714.1 563.6 713.2 564.8 712.5C565.9 711.8 567.1 711.6 568.5 711.5C569.9 711.3 571.8 711.1 573.0 711.8C574.2 712.4 575.1 713.9 576.0 715.5C576.9 717.1 577.5 719.4 578.2 721.5C579.0 723.6 579.8 726.0 580.5 728.2C581.2 730.5 582.0 732.6 582.8 735.0C583.5 737.4 584.4 740.8 585.0 742.5C585.6 744.2 586.0 745.2 586.5 745.5C587.0 745.8 587.3 746.5 587.7 744.0C588.1 741.5 588.3 734.8 588.8 730.5C589.2 726.2 589.6 721.4 590.2 718.5C590.9 715.6 591.5 714.4 592.5 713.2C593.5 712.1 595.2 711.7 596.2 711.5C597.2 711.2 597.9 711.5 598.5 711.6C599.1 711.7 599.5 711.7 600.0 712.2C600.5 712.7 601.2 713.0 601.8 714.8C602.4 716.5 603.0 720.4 603.8 723.0C604.5 725.6 605.1 728.8 606.0 730.5C606.9 732.2 607.9 732.8 609.0 733.5C610.1 734.2 611.5 734.6 612.8 735.0C614.0 735.4 615.5 735.2 616.5 735.8C617.5 736.2 618.0 736.9 618.8 738.0C619.5 739.1 620.2 741.4 621.0 742.2C621.8 743.0 622.4 743.0 623.2 743.0C624.1 742.9 625.4 743.1 626.2 741.8C627.1 740.4 627.9 737.6 628.5 735.0C629.1 732.4 629.5 728.5 630.0 726.0C630.5 723.5 631.0 721.1 631.5 720.0C632.0 718.9 632.5 718.8 633.0 719.2C633.5 719.8 634.0 720.6 634.5 723.0C635.0 725.4 635.4 730.8 636.0 733.5C636.6 736.2 637.4 737.9 638.2 739.5C639.1 741.1 640.4 742.5 641.2 743.2C642.1 744.0 642.9 744.2 643.5 744.0C644.1 743.8 644.5 743.5 645.0 741.8C645.5 740.0 645.9 736.6 646.5 733.5C647.1 730.4 648.0 726.1 648.8 723.0C649.5 719.9 650.3 716.5 651.0 714.8C651.7 713.0 652.2 712.2 652.8 712.2C653.3 712.2 653.8 713.0 654.3 714.8C654.8 716.5 655.3 720.5 655.8 723.0C656.3 725.5 656.8 728.7 657.3 729.8C657.8 730.8 658.3 730.4 658.8 729.3C659.3 728.2 659.7 725.0 660.3 723.0C660.9 721.0 661.4 718.6 662.2 717.0C663.1 715.4 664.2 714.0 665.2 713.2C666.2 712.5 667.4 712.3 668.2 712.5C669.1 712.7 669.8 713.6 670.5 714.3C671.2 715.0 671.8 716.4 672.8 716.7C673.8 717.0 675.1 716.6 676.5 716.2C677.9 715.9 679.5 715.2 681.0 714.8C682.5 714.2 684.1 713.7 685.5 713.2C686.9 712.8 688.4 711.9 689.2 712.0C690.1 712.2 690.3 712.4 690.8 714.0C691.2 715.6 691.4 718.8 691.8 721.5C692.2 724.2 692.6 728.5 693.0 730.5C693.4 732.5 693.8 734.0 694.2 733.5C694.6 733.0 694.9 729.8 695.2 727.5C695.6 725.2 695.8 721.6 696.3 720.0C696.8 718.4 697.3 718.2 698.2 717.8C699.2 717.3 701.0 717.3 702.0 717.3C703.0 717.3 703.7 716.8 704.2 717.8C704.8 718.7 705.1 720.1 705.5 723.0C705.8 725.9 706.0 731.5 706.2 735.0C706.4 738.5 706.5 741.5 706.8 744.0C707.0 746.5 707.3 748.6 707.7 750.0C708.1 751.4 708.7 752.2 709.2 752.2C709.8 752.2 710.3 751.2 711.0 750.0C711.7 748.8 712.5 746.5 713.2 744.8C714.0 743.0 714.8 741.6 715.5 739.5C716.2 737.4 717.0 734.8 717.8 732.0C718.5 729.2 719.2 725.6 720.0 723.0C720.8 720.4 721.5 717.7 722.2 716.2C723.0 714.8 723.6 714.5 724.5 714.3C725.4 714.1 726.2 714.8 727.5 715.2C728.8 715.6 730.2 716.3 732.0 716.7C733.8 717.1 736.0 717.4 738.0 717.5C740.0 717.5 742.0 717.1 744.0 717.0C746.0 716.9 748.0 716.9 750.0 717.0C752.0 717.1 754.2 717.8 756.0 717.8C757.8 717.7 759.5 716.6 760.5 716.7C761.5 716.8 761.5 717.2 762.0 718.5C762.5 719.8 763.0 722.6 763.5 724.5C764.0 726.4 764.5 729.2 765.0 729.8C765.5 730.2 765.8 729.1 766.2 727.5C766.7 725.9 767.2 722.4 767.7 720.0C768.2 717.6 768.8 714.9 769.5 713.2C770.2 711.6 770.9 710.9 771.8 710.2C772.6 709.6 773.9 709.4 774.8 709.5C775.6 709.6 776.4 709.8 777.0 711.0C777.6 712.2 778.0 714.8 778.5 717.0C779.0 719.2 779.2 723.0 779.7 724.5C780.2 726.0 780.7 726.8 781.2 726.0C781.7 725.2 782.2 722.1 782.7 720.0C783.2 717.9 783.7 714.8 784.5 713.2C785.3 711.8 786.4 711.6 787.5 711.0C788.6 710.4 790.1 710.0 791.2 709.5C792.4 709.0 793.4 708.3 794.2 708.0C795.1 707.7 795.8 707.5 796.5 707.7C797.2 708.0 798.0 708.5 798.8 709.5C799.5 710.5 800.3 712.1 801.0 714.0C801.7 715.9 802.2 719.0 802.8 720.8C803.4 722.5 803.8 724.0 804.8 724.8C805.7 725.5 807.2 725.1 808.5 725.2C809.8 725.4 811.2 725.2 812.2 725.5C813.2 725.9 813.8 726.4 814.5 727.5C815.2 728.6 816.0 730.5 816.8 732.0C817.5 733.5 818.2 735.4 819.0 736.5C819.8 737.6 820.5 738.8 821.2 738.8C822.0 738.8 822.6 737.3 823.5 736.5C824.4 735.7 825.4 734.4 826.5 733.8C827.6 733.2 829.0 732.8 830.2 732.8C831.5 732.7 832.9 733.2 834.0 733.5C835.1 733.8 836.2 734.8 837.0 734.2C837.8 733.8 838.3 731.5 838.8 730.5C839.3 729.5 839.4 728.8 840.0 728.2C840.6 727.8 841.5 727.2 842.2 727.5C843.0 727.8 843.6 729.2 844.5 730.2C845.4 731.2 846.4 732.7 847.5 733.2C848.6 733.8 850.2 733.7 851.2 733.5C852.2 733.3 852.9 733.0 853.5 732.0C854.1 731.0 854.5 728.6 855.0 727.5C855.5 726.4 856.2 725.4 856.8 725.2C857.4 725.1 858.2 725.8 858.8 726.8C859.3 727.8 859.7 729.9 860.2 731.2C860.8 732.6 861.7 735.1 862.2 735.0C862.7 734.9 862.9 732.8 863.2 730.5C863.6 728.2 863.9 723.8 864.3 721.5C864.7 719.2 865.2 717.9 865.8 717.0C866.4 716.1 867.0 716.1 867.8 716.2C868.5 716.4 869.2 717.2 870.0 717.8C870.8 718.2 871.6 719.5 872.2 719.2C872.9 719.0 873.1 717.2 873.8 716.2C874.4 715.2 875.1 713.9 876.0 713.2C876.9 712.6 878.0 712.4 879.0 712.5C880.0 712.6 881.1 712.8 882.0 713.7C882.9 714.6 883.6 716.5 884.2 717.8C884.9 719.0 885.0 720.8 885.8 721.5C886.5 722.2 887.6 722.2 888.8 722.2C889.9 722.2 891.2 721.8 892.5 721.5C893.8 721.2 895.2 720.4 896.2 720.3C897.2 720.2 897.9 720.0 898.5 720.8C899.1 721.5 899.3 722.6 899.7 724.5C900.1 726.4 900.3 729.6 900.8 732.0C901.2 734.4 901.8 737.5 902.2 738.8C902.8 740.0 903.2 739.6 903.8 739.2C904.2 738.8 904.6 737.8 905.2 736.5C905.9 735.2 906.8 732.9 907.5 731.2C908.2 729.6 909.0 728.0 909.8 726.8C910.5 725.5 911.3 724.2 912.0 723.8C912.7 723.2 913.2 723.1 913.8 723.8C914.3 724.4 914.8 725.9 915.3 727.5C915.8 729.1 916.3 732.2 916.8 733.5C917.3 734.8 917.7 735.1 918.3 735.0C918.9 734.9 919.5 733.8 920.2 732.8C921.0 731.8 921.6 730.4 922.5 729.0C923.4 727.6 924.5 725.6 925.5 724.5C926.5 723.4 927.8 722.7 928.5 722.5C929.2 722.4 929.6 722.7 930.0 723.8C930.4 724.8 930.7 727.2 931.0 729.0C931.4 730.8 931.7 732.8 932.2 734.2C932.8 735.7 933.6 737.2 934.5 737.7C935.4 738.2 936.6 738.0 937.5 737.2C938.4 736.5 939.0 735.1 939.8 733.5C940.5 731.9 941.2 728.8 942.0 727.5C942.8 726.2 943.5 725.7 944.2 725.7C945.0 725.7 945.6 726.7 946.5 727.5C947.4 728.3 948.2 729.8 949.5 730.5C950.8 731.2 952.9 731.8 954.0 731.7C955.1 731.6 955.5 730.7 956.2 729.8C957.0 728.8 957.9 726.7 958.5 726.0C959.1 725.3 959.5 725.2 960.0 725.7C960.5 726.2 960.8 727.0 961.2 729.0C961.6 731.0 961.9 734.8 962.2 738.0C962.6 741.2 962.9 745.5 963.3 748.5C963.7 751.5 964.2 753.5 964.8 756.0C965.4 758.5 966.0 761.9 966.8 763.5C967.5 765.1 968.4 765.8 969.0 765.8C969.6 765.8 970.0 765.4 970.5 763.5C971.0 761.6 971.3 757.8 971.7 754.5C972.1 751.2 972.4 746.8 972.8 744.0C973.1 741.2 973.6 739.0 974.0 738.0C974.3 737.0 974.6 737.3 975.0 737.7C975.4 738.1 975.9 738.8 976.5 740.2C977.1 741.7 978.0 744.1 978.8 746.2C979.5 748.4 980.1 750.6 980.7 753.0C981.3 755.4 981.9 758.8 982.5 760.5C983.1 762.2 983.8 763.2 984.3 763.2C984.8 763.2 985.3 762.5 985.8 760.5C986.2 758.5 986.7 755.0 987.0 751.5C987.3 748.0 987.5 743.2 987.8 739.5C988.0 735.8 988.1 731.5 988.5 729.0C988.9 726.5 989.2 725.5 990.0 724.5C990.8 723.5 992.0 723.8 993.0 723.0C994.0 722.2 995.0 721.0 996.0 720.0C997.0 719.0 998.0 717.9 999.0 717.0C1000.0 716.1 1001.0 715.4 1002.0 714.8C1003.0 714.1 1004.1 713.2 1005.0 713.2C1005.9 713.2 1006.5 713.9 1007.2 714.8C1008.0 715.6 1008.6 717.2 1009.5 718.5C1010.4 719.8 1011.6 721.4 1012.5 722.2C1013.4 723.1 1014.1 723.9 1014.8 723.8C1015.4 723.6 1015.8 722.5 1016.2 721.5C1016.8 720.5 1017.1 718.8 1017.8 717.8C1018.4 716.8 1019.2 715.8 1020.0 715.5C1020.8 715.2 1021.4 715.5 1022.2 716.2C1023.1 717.0 1024.2 718.5 1025.2 720.0C1026.2 721.5 1027.2 724.1 1028.2 725.2C1029.2 726.4 1030.2 726.8 1031.2 726.8C1032.2 726.7 1033.4 725.1 1034.2 724.8C1035.1 724.5 1035.8 724.2 1036.5 724.8C1037.2 725.4 1038.0 726.7 1038.8 728.2C1039.5 729.8 1040.3 732.0 1041.0 734.2C1041.7 736.5 1042.2 739.2 1042.8 741.8C1043.3 744.2 1043.8 747.8 1044.3 749.2C1044.8 750.8 1045.3 750.9 1045.8 750.8C1046.3 750.6 1046.9 750.1 1047.3 748.5C1047.7 746.9 1047.9 743.5 1048.2 741.0C1048.5 738.5 1048.8 735.6 1049.2 733.5C1049.7 731.4 1050.1 729.5 1050.8 728.2C1051.4 727.0 1052.1 726.5 1053.0 726.0C1053.9 725.5 1055.2 726.2 1056.0 725.2C1056.8 724.2 1057.0 721.6 1057.5 720.0C1058.0 718.4 1058.4 716.6 1059.0 715.8C1059.6 715.0 1060.4 715.0 1061.2 715.2C1062.1 715.4 1063.1 716.6 1064.2 717.0C1065.4 717.4 1066.4 717.3 1068.0 717.3C1069.6 717.2 1072.2 717.0 1074.0 716.7C1075.8 716.5 1077.5 716.0 1078.5 715.8C1079.5 715.5 1079.2 715.2 1080.0 715.2C1080.8 715.2 1082.2 714.8 1083.0 715.5C1083.8 716.2 1084.2 717.9 1084.8 719.2C1085.3 720.6 1085.8 723.6 1086.3 723.8C1086.8 723.9 1087.3 721.6 1087.8 720.0C1088.3 718.4 1088.6 715.4 1089.3 714.0C1090.0 712.6 1090.9 712.0 1091.7 711.8C1092.5 711.5 1093.5 711.7 1094.2 712.2C1095.0 712.7 1095.8 713.6 1096.5 714.8C1097.2 715.9 1098.0 717.5 1098.8 719.2C1099.5 721.0 1100.1 723.5 1101.0 725.2C1101.9 727.0 1103.0 728.7 1104.0 729.8C1105.0 730.8 1106.0 731.6 1107.0 731.7C1108.0 731.8 1108.9 731.3 1110.0 730.5C1111.1 729.7 1112.6 727.9 1113.8 726.8C1114.9 725.6 1115.8 725.0 1116.8 723.8C1117.7 722.5 1118.5 720.8 1119.3 719.2C1120.1 717.8 1120.9 716.1 1121.7 714.8C1122.5 713.4 1123.3 712.0 1124.2 711.3C1125.2 710.5 1126.2 710.3 1127.2 710.2C1128.2 710.2 1129.1 710.6 1130.2 711.0C1131.4 711.4 1132.6 712.0 1134.0 712.8C1135.4 713.5 1137.0 714.6 1138.5 715.5C1140.0 716.4 1141.6 717.5 1143.0 718.2C1144.4 719.0 1145.5 719.2 1146.8 720.0C1148.0 720.8 1149.2 721.8 1150.5 723.0C1151.8 724.2 1153.0 726.2 1154.2 727.5C1155.5 728.8 1156.8 729.7 1158.0 730.5C1159.2 731.3 1160.4 732.0 1161.8 732.3C1163.1 732.5 1165.1 732.3 1166.2 732.0C1167.4 731.7 1167.8 731.8 1168.5 730.5C1169.2 729.2 1170.0 726.5 1170.8 724.5C1171.5 722.5 1172.2 720.2 1173.0 718.5C1173.8 716.8 1174.5 715.1 1175.2 714.0C1176.0 712.9 1176.8 712.1 1177.5 711.8C1178.2 711.4 1178.9 711.7 1179.8 712.0C1180.6 712.4 1181.6 713.5 1182.8 714.0C1183.9 714.5 1185.5 715.1 1186.5 715.2C1187.5 715.3 1188.0 715.6 1188.8 714.8C1189.5 713.9 1190.2 711.4 1191.0 710.2C1191.8 709.1 1192.5 708.2 1193.2 708.0C1194.0 707.8 1194.8 707.9 1195.5 708.8C1196.2 709.6 1196.7 711.4 1197.3 713.2C1197.9 715.1 1198.7 717.4 1199.2 720.0C1199.8 722.6 1200.2 726.4 1200.8 729.0C1201.2 731.6 1201.8 734.3 1202.2 735.8C1202.8 737.2 1203.2 737.7 1203.8 737.7C1204.2 737.7 1204.8 737.1 1205.2 735.8C1205.8 734.4 1206.1 731.4 1206.8 729.8C1207.4 728.1 1208.1 726.9 1209.0 726.0C1209.9 725.1 1211.1 724.8 1212.0 724.5C1212.9 724.2 1213.6 724.7 1214.2 724.2C1214.9 723.7 1215.2 723.0 1215.8 721.5C1216.2 720.0 1216.8 717.0 1217.2 715.5C1217.8 714.0 1218.0 713.4 1218.8 712.8C1219.5 712.2 1220.8 711.9 1221.8 711.8C1222.8 711.6 1223.8 711.5 1224.8 711.8C1225.8 712.0 1226.8 712.8 1227.8 713.2C1228.8 713.7 1229.4 714.2 1230.8 714.3C1232.1 714.4 1234.5 714.1 1236.0 714.0C1237.5 713.9 1238.8 713.9 1239.8 713.5C1240.8 713.2 1241.2 712.5 1242.0 711.8C1242.8 711.0 1243.4 709.5 1244.2 708.8C1245.1 708.0 1246.2 707.8 1247.2 707.2C1248.2 706.8 1249.2 706.6 1250.2 705.8C1251.2 704.9 1252.4 703.6 1253.2 702.0C1254.1 700.4 1254.8 698.2 1255.5 696.0C1256.2 693.8 1257.0 690.5 1257.8 688.5C1258.5 686.5 1259.1 684.7 1259.7 684.0C1260.3 683.3 1260.9 683.7 1261.5 684.5C1262.1 685.2 1262.7 686.7 1263.3 688.5C1263.9 690.3 1264.6 692.9 1265.2 695.2C1265.9 697.6 1266.6 700.7 1267.2 702.8C1267.8 704.8 1268.2 706.7 1268.7 707.7C1269.2 708.7 1269.8 709.0 1270.5 708.8C1271.2 708.5 1272.0 707.1 1272.8 706.5C1273.5 705.9 1274.1 705.4 1275.0 705.3C1275.9 705.2 1277.0 705.7 1278.0 705.8C1279.0 705.8 1280.1 706.0 1281.0 705.5C1281.9 705.0 1282.5 703.5 1283.2 702.8C1284.0 702.0 1284.6 701.1 1285.2 701.2C1285.8 701.4 1286.5 702.7 1287.0 703.5C1287.5 704.3 1287.9 705.7 1288.5 706.2C1289.1 706.8 1289.9 707.1 1290.8 706.8C1291.6 706.5 1292.8 705.2 1293.8 704.2C1294.8 703.3 1295.8 702.1 1296.8 701.2C1297.8 700.4 1298.9 699.3 1299.8 699.0C1300.6 698.7 1301.1 698.8 1301.7 699.3C1302.3 699.8 1303.0 701.3 1303.5 702.0C1304.0 702.7 1304.4 703.4 1305.0 703.5C1305.6 703.6 1306.4 703.3 1307.2 702.8C1308.1 702.2 1309.4 700.6 1310.2 700.2C1311.1 699.8 1311.5 700.0 1312.2 700.5C1313.0 701.0 1314.0 702.9 1314.8 703.5C1315.5 704.1 1316.3 704.6 1317.0 704.2C1317.7 703.9 1318.3 702.4 1318.8 701.2C1319.3 700.1 1319.4 699.1 1320.0 697.5C1320.6 695.9 1321.5 693.5 1322.2 691.5C1323.0 689.5 1323.8 686.8 1324.5 685.5C1325.2 684.2 1325.7 683.8 1326.3 684.0C1326.9 684.2 1327.5 685.9 1328.2 687.0C1329.0 688.1 1329.5 689.8 1330.5 690.8C1331.5 691.8 1333.0 692.4 1334.2 693.0C1335.5 693.6 1336.6 694.1 1338.0 694.5C1339.4 694.9 1341.2 695.4 1342.5 695.2C1343.8 695.1 1344.8 694.9 1345.5 693.8C1346.2 692.6 1346.5 691.6 1347.0 688.5C1347.5 685.4 1347.9 679.7 1348.5 675.0C1349.1 670.3 1349.6 669.2 1350.3 660.0C1351.1 650.9 1352.0 632.2 1352.8 620.0C1353.5 607.8 1354.4 594.4 1355.0 587.0C1355.6 579.6 1356.0 577.6 1356.5 575.8C1357.0 573.9 1357.5 573.9 1358.0 575.8C1358.5 577.6 1358.8 579.6 1359.2 587.0C1359.6 594.4 1359.9 607.8 1360.2 620.0C1360.6 632.2 1361.0 648.4 1361.5 660.0C1361.9 671.7 1362.3 683.5 1362.8 690.0C1363.2 696.5 1363.6 696.9 1364.2 699.0C1364.9 701.1 1365.4 702.0 1366.5 702.8C1367.6 703.5 1369.5 703.4 1371.0 703.5C1372.5 703.6 1374.0 703.5 1375.5 703.5C1377.0 703.5 1378.9 703.7 1380.0 703.2C1381.1 702.7 1381.6 702.0 1382.2 700.5C1382.9 699.0 1383.2 697.1 1383.8 694.5C1384.2 691.9 1384.7 687.0 1385.2 684.8C1385.8 682.5 1386.5 681.8 1387.2 681.3C1387.9 680.8 1388.5 681.2 1389.3 681.8C1390.1 682.3 1391.2 683.5 1392.0 684.8C1392.8 686.0 1393.5 687.5 1394.2 689.2C1395.0 691.0 1395.9 694.1 1396.5 695.2C1397.1 696.4 1397.2 697.2 1397.7 696.3C1398.2 695.4 1398.7 692.8 1399.2 690.0C1399.8 687.2 1400.2 682.9 1401.0 679.5C1401.8 676.1 1402.9 672.9 1403.8 669.5C1404.6 666.1 1405.3 661.4 1406.0 659.0C1406.7 656.6 1407.2 655.5 1407.8 655.2C1408.3 655.0 1408.8 654.9 1409.3 657.5C1409.8 660.1 1410.3 668.1 1410.5 671.0C1410.7 673.9 1410.5 671.3 1410.8 675.0C1411.0 678.7 1411.4 689.2 1411.8 693.0C1412.2 696.8 1412.6 696.6 1413.3 697.5C1414.0 698.4 1414.9 698.2 1416.0 698.2C1417.1 698.3 1418.8 698.4 1419.8 697.8C1420.8 697.2 1421.4 697.0 1422.0 694.5C1422.6 692.0 1423.0 687.0 1423.5 682.5C1424.0 678.0 1424.7 672.4 1425.0 667.5C1425.3 662.6 1424.9 658.4 1425.2 653.0C1425.5 647.6 1426.2 638.8 1426.7 635.0C1427.2 631.2 1427.7 630.7 1428.2 630.2C1428.8 629.7 1429.5 630.2 1430.0 632.0C1430.5 633.8 1431.0 636.8 1431.5 641.0C1432.0 645.2 1432.7 651.8 1433.3 657.5C1433.9 663.2 1434.7 669.6 1435.2 675.0C1435.7 680.4 1435.8 685.2 1436.4 690.0C1437.0 694.8 1437.8 700.4 1438.8 703.5C1439.8 706.6 1441.5 707.2 1442.7 708.8C1443.9 710.2 1445.0 711.6 1446.0 712.5C1447.0 713.4 1447.9 714.2 1449.0 714.3C1450.1 714.4 1451.2 713.7 1452.8 713.2C1454.2 712.8 1456.4 712.0 1458.0 711.5C1459.6 710.9 1461.3 710.3 1462.5 710.0C1463.7 709.6 1464.5 709.2 1465.2 709.5C1466.0 709.8 1466.5 710.7 1467.0 711.8C1467.5 712.8 1468.0 715.3 1468.5 715.8C1469.0 716.3 1469.5 715.7 1470.0 714.8C1470.5 713.8 1471.0 711.4 1471.5 710.2C1472.0 709.1 1472.2 708.2 1473.0 707.7C1473.8 707.2 1474.8 707.5 1476.0 707.2C1477.2 707.0 1479.1 706.9 1480.5 706.5C1481.9 706.1 1483.0 705.1 1484.2 704.7C1485.5 704.3 1486.6 704.4 1488.0 704.2C1489.4 704.1 1491.1 703.9 1492.5 703.8C1493.9 703.7 1495.2 703.6 1496.2 703.8C1497.2 703.9 1497.9 704.2 1498.5 704.7C1499.1 705.2 1499.8 706.2 1500.0 706.5"/><path id="ar" d="M127.5 735.0C127.8 733.6 128.4 729.0 129.0 726.8C129.6 724.5 130.2 722.6 130.8 721.5C131.4 720.4 132.2 720.0 132.8 720.3C133.3 720.5 133.8 721.4 134.2 723.0C134.8 724.6 135.1 728.2 135.8 729.8C136.4 731.3 137.1 732.1 138.0 732.3C138.9 732.5 140.0 731.5 141.0 730.8C142.0 730.1 143.0 729.2 144.0 728.2C145.0 727.3 146.2 725.8 147.0 725.2C147.8 724.7 148.0 724.2 148.5 724.8C149.0 725.4 149.5 726.5 150.0 729.0C150.5 731.5 151.0 737.0 151.5 739.5C152.0 742.0 152.5 743.7 153.0 744.3C153.5 744.9 153.9 744.8 154.5 743.2C155.1 741.7 156.0 737.9 156.8 735.0C157.5 732.1 158.1 728.9 159.0 726.0C159.9 723.1 161.0 719.6 162.0 717.8C163.0 715.9 163.8 715.4 165.0 714.8C166.2 714.1 167.8 714.2 169.5 714.0C171.2 713.8 173.8 713.6 175.5 713.2C177.2 712.9 178.6 712.2 180.0 711.8C181.4 711.3 182.9 710.7 183.8 710.7C184.6 710.7 184.8 710.8 185.2 711.8C185.8 712.7 186.2 714.8 186.8 716.2C187.2 717.8 187.8 720.5 188.2 720.8C188.8 721.0 189.1 719.2 189.8 717.8C190.4 716.3 191.2 713.2 192.0 712.2C192.8 711.2 193.6 711.3 194.2 711.8C194.9 712.2 195.1 713.5 195.8 714.8C196.4 716.0 197.1 718.0 198.0 719.2C198.9 720.5 199.9 721.6 201.0 722.2C202.1 722.9 203.9 723.4 204.8 723.0C205.6 722.6 205.8 721.6 206.2 720.0C206.8 718.4 207.2 714.8 207.8 713.2C208.3 711.8 209.0 710.9 209.6 711.0C210.1 711.1 210.6 712.0 211.1 714.0C211.5 716.0 211.8 720.0 212.2 723.0C212.7 726.0 213.1 729.2 213.8 732.0C214.4 734.8 215.2 737.5 216.0 739.5C216.8 741.5 217.6 743.3 218.2 744.3C218.9 745.2 219.3 745.8 219.8 745.2C220.2 744.7 220.4 744.0 220.8 741.0C221.2 738.0 221.7 730.9 222.3 727.5C222.9 724.1 223.7 721.5 224.2 720.8C224.8 720.0 225.3 721.1 225.8 723.0C226.2 724.9 226.4 728.9 226.8 732.0C227.2 735.1 227.6 739.5 228.0 741.8C228.4 744.0 229.1 745.0 229.5 745.2C229.9 745.5 230.3 745.0 230.7 743.2C231.1 741.5 231.3 737.4 231.8 735.0C232.2 732.6 232.5 730.3 233.2 729.0C234.0 727.7 235.1 727.6 236.2 727.2C237.4 726.9 238.6 726.9 240.0 726.9C241.4 726.9 243.4 727.2 244.5 727.0C245.6 726.9 246.1 726.9 246.8 726.0C247.4 725.1 247.6 723.4 248.2 721.5C248.9 719.6 249.8 716.5 250.5 714.8C251.2 713.0 252.0 712.0 252.8 711.3C253.5 710.6 254.4 710.4 255.0 710.7C255.6 711.0 256.1 711.7 256.5 713.2C256.9 714.8 257.2 717.5 257.7 720.0C258.1 722.5 258.8 726.5 259.2 728.2C259.6 730.0 259.8 730.6 260.2 730.2C260.7 729.8 261.1 727.8 261.8 726.0C262.4 724.2 263.1 721.2 264.0 719.2C264.9 717.2 266.0 715.2 267.0 714.0C268.0 712.8 268.8 712.5 270.0 711.8C271.2 711.0 273.0 710.2 274.5 709.5C276.0 708.8 277.5 708.0 279.0 707.2C280.5 706.5 282.2 705.4 283.5 705.0C284.8 704.6 285.2 704.5 286.5 704.7C287.8 705.0 289.5 706.0 291.0 706.5C292.5 707.0 294.0 707.8 295.5 708.0C297.0 708.2 298.5 707.8 300.0 707.7C301.5 707.6 303.2 707.6 304.5 707.2C305.8 706.9 306.6 706.4 307.5 705.8C308.4 705.1 309.0 703.7 309.8 703.2C310.5 702.7 311.2 702.2 312.0 702.8C312.8 703.3 313.5 705.1 314.2 706.5C315.0 707.9 315.6 709.5 316.5 711.0C317.4 712.5 318.6 714.3 319.5 715.2C320.4 716.1 320.9 716.3 321.8 716.2C322.6 716.2 323.8 715.8 324.8 714.8C325.8 713.8 326.8 711.9 327.8 710.2C328.8 708.6 329.8 706.4 330.8 705.0C331.8 703.6 332.8 702.3 333.8 701.7C334.8 701.1 335.9 700.8 336.8 701.2C337.6 701.7 338.1 702.8 338.7 704.2C339.3 705.8 339.7 709.0 340.2 710.2C340.7 711.5 341.1 712.6 341.7 711.8C342.2 710.9 342.8 706.9 343.5 705.0C344.2 703.1 345.1 701.1 345.8 700.5C346.4 699.9 347.1 700.2 347.7 701.2C348.3 702.2 348.8 705.0 349.5 706.5C350.2 708.0 351.1 710.1 351.8 710.2C352.4 710.4 352.9 708.4 353.7 707.2C354.4 706.1 355.4 704.2 356.2 703.5C357.1 702.8 357.9 703.2 358.5 703.2C359.1 703.2 359.2 702.8 360.0 703.5C360.8 704.2 362.0 705.9 363.0 707.2C364.0 708.6 365.0 709.9 366.0 711.8C367.0 713.6 368.0 716.8 369.0 718.5C370.0 720.2 371.0 722.0 372.0 722.2C373.0 722.5 374.1 720.6 375.0 720.0C375.9 719.4 376.6 718.5 377.2 718.5C377.9 718.5 378.2 718.9 378.8 720.0C379.2 721.1 379.7 723.5 380.2 725.2C380.8 727.0 381.6 730.1 382.2 730.5C382.8 730.9 383.1 729.0 383.7 727.5C384.2 726.0 384.8 722.8 385.5 721.5C386.2 720.2 387.0 720.0 387.8 720.0C388.5 720.0 389.2 721.0 390.0 721.5C390.8 722.0 391.6 723.2 392.2 723.0C392.9 722.8 393.6 721.6 394.2 720.0C394.8 718.4 395.3 714.8 396.0 713.2C396.7 711.7 397.6 710.7 398.2 710.7C398.9 710.7 399.4 711.8 400.2 713.2C400.9 714.7 401.8 717.1 402.8 719.2C403.7 721.4 404.8 724.5 405.8 726.0C406.8 727.5 407.6 727.9 408.8 728.2C409.9 728.6 411.5 727.6 412.5 728.2C413.5 728.9 414.1 730.6 414.8 732.0C415.4 733.4 416.1 735.5 416.7 736.5C417.3 737.5 417.8 738.1 418.5 738.0C419.2 737.9 419.9 736.5 420.8 735.8C421.6 735.0 422.8 734.1 423.8 733.5C424.8 732.9 425.9 732.9 426.8 732.3C427.6 731.7 428.4 731.0 429.0 729.8C429.6 728.5 430.0 726.4 430.5 724.5C431.0 722.6 431.5 719.8 432.0 718.5C432.5 717.2 433.0 716.5 433.5 716.7C434.0 717.0 434.5 718.2 435.0 720.0C435.5 721.8 435.9 725.8 436.5 727.5C437.1 729.2 437.9 730.2 438.8 730.2C439.6 730.2 440.8 729.0 441.8 727.5C442.8 726.0 443.8 723.2 444.8 721.5C445.8 719.8 446.8 718.0 447.8 717.0C448.8 716.0 449.8 715.8 450.8 715.5C451.8 715.2 453.0 714.8 453.8 715.2C454.5 715.6 454.8 716.2 455.2 717.8C455.8 719.3 456.1 722.4 456.8 724.5C457.4 726.6 458.1 729.0 459.0 730.5C459.9 732.0 460.9 733.0 462.0 733.5C463.1 734.0 464.8 734.1 465.8 733.5C466.8 732.9 467.1 731.5 468.0 729.8C468.9 728.0 470.0 725.6 471.0 723.0C472.0 720.4 473.1 716.8 474.0 714.0C474.9 711.2 475.9 708.3 476.7 706.5C477.5 704.7 478.3 703.5 478.9 703.2C479.6 703.0 480.1 703.8 480.8 705.0C481.4 706.2 482.1 709.0 482.7 710.2C483.3 711.5 483.9 712.3 484.5 712.2C485.1 712.1 485.7 711.1 486.3 709.5C486.9 707.9 487.4 704.5 488.2 702.8C489.1 701.0 490.2 699.8 491.2 699.0C492.2 698.2 493.4 698.2 494.2 698.2C495.1 698.3 495.9 698.5 496.5 699.3C497.1 700.0 497.4 701.8 498.0 702.8C498.6 703.7 499.4 704.2 500.2 705.0C501.1 705.8 502.4 706.1 503.2 707.2C504.1 708.4 504.9 709.9 505.5 711.8C506.1 713.6 506.5 716.4 507.0 718.5C507.5 720.6 507.9 723.2 508.5 724.5C509.1 725.8 509.9 726.2 510.8 726.3C511.6 726.4 512.9 726.3 513.8 725.2C514.6 724.2 515.2 722.0 516.0 720.0C516.8 718.0 517.4 714.6 518.2 713.2C519.1 711.9 520.2 711.9 521.2 711.8C522.2 711.6 523.4 711.7 524.2 712.2C525.1 712.7 525.8 713.6 526.5 714.8C527.2 715.9 528.0 717.4 528.8 719.2C529.5 721.1 530.2 723.6 531.0 726.0C531.8 728.4 532.6 731.5 533.2 733.5C533.9 735.5 534.2 737.2 534.8 738.0C535.2 738.8 535.8 739.0 536.2 738.0C536.8 737.0 537.2 734.5 537.8 732.0C538.2 729.5 538.6 725.8 539.2 723.0C539.9 720.2 540.6 717.2 541.5 715.5C542.4 713.8 543.2 713.2 544.5 712.5C545.8 711.8 547.8 711.5 549.0 711.5C550.2 711.4 551.2 711.4 552.0 712.2C552.8 713.0 553.0 714.6 553.5 716.2C554.0 717.9 554.5 721.0 555.0 722.2C555.5 723.5 555.9 724.0 556.5 723.8C557.1 723.5 557.9 722.1 558.8 720.8C559.6 719.4 560.8 716.9 561.8 715.5C562.8 714.1 563.6 713.2 564.8 712.5C565.9 711.8 567.1 711.6 568.5 711.5C569.9 711.3 571.8 711.1 573.0 711.8C574.2 712.4 575.1 713.9 576.0 715.5C576.9 717.1 577.5 719.4 578.2 721.5C579.0 723.6 579.8 726.0 580.5 728.2C581.2 730.5 582.0 732.6 582.8 735.0C583.5 737.4 584.4 740.8 585.0 742.5C585.6 744.2 586.0 745.2 586.5 745.5C587.0 745.8 587.3 746.5 587.7 744.0C588.1 741.5 588.3 734.8 588.8 730.5C589.2 726.2 589.6 721.4 590.2 718.5C590.9 715.6 591.5 714.4 592.5 713.2C593.5 712.1 595.2 711.7 596.2 711.5C597.2 711.2 597.9 711.5 598.5 711.6C599.1 711.7 599.5 711.7 600.0 712.2C600.5 712.7 601.2 713.0 601.8 714.8C602.4 716.5 603.0 720.4 603.8 723.0C604.5 725.6 605.1 728.8 606.0 730.5C606.9 732.2 607.9 732.8 609.0 733.5C610.1 734.2 611.5 734.6 612.8 735.0C614.0 735.4 615.5 735.2 616.5 735.8C617.5 736.2 618.0 736.9 618.8 738.0C619.5 739.1 620.2 741.4 621.0 742.2C621.8 743.0 622.4 743.0 623.2 743.0C624.1 742.9 625.4 743.1 626.2 741.8C627.1 740.4 627.9 737.6 628.5 735.0C629.1 732.4 629.5 728.5 630.0 726.0C630.5 723.5 631.0 721.1 631.5 720.0C632.0 718.9 632.5 718.8 633.0 719.2C633.5 719.8 634.0 720.6 634.5 723.0C635.0 725.4 635.4 730.8 636.0 733.5C636.6 736.2 637.4 737.9 638.2 739.5C639.1 741.1 640.4 742.5 641.2 743.2C642.1 744.0 642.9 744.2 643.5 744.0C644.1 743.8 644.5 743.5 645.0 741.8C645.5 740.0 645.9 736.6 646.5 733.5C647.1 730.4 648.0 726.1 648.8 723.0C649.5 719.9 650.3 716.5 651.0 714.8C651.7 713.0 652.2 712.2 652.8 712.2C653.3 712.2 653.8 713.0 654.3 714.8C654.8 716.5 655.3 720.5 655.8 723.0C656.3 725.5 656.8 728.7 657.3 729.8C657.8 730.8 658.3 730.4 658.8 729.3C659.3 728.2 659.7 725.0 660.3 723.0C660.9 721.0 661.4 718.6 662.2 717.0C663.1 715.4 664.2 714.0 665.2 713.2C666.2 712.5 667.4 712.3 668.2 712.5C669.1 712.7 669.8 713.6 670.5 714.3C671.2 715.0 671.8 716.4 672.8 716.7C673.8 717.0 675.1 716.6 676.5 716.2C677.9 715.9 679.5 715.2 681.0 714.8C682.5 714.2 684.1 713.7 685.5 713.2C686.9 712.8 688.4 711.9 689.2 712.0C690.1 712.2 690.3 712.4 690.8 714.0C691.2 715.6 691.4 718.8 691.8 721.5C692.2 724.2 692.6 728.5 693.0 730.5C693.4 732.5 693.8 734.0 694.2 733.5C694.6 733.0 694.9 729.8 695.2 727.5C695.6 725.2 695.8 721.6 696.3 720.0C696.8 718.4 697.3 718.2 698.2 717.8C699.2 717.3 701.0 717.3 702.0 717.3C703.0 717.3 703.7 716.8 704.2 717.8C704.8 718.7 705.1 720.1 705.5 723.0C705.8 725.9 706.0 731.5 706.2 735.0C706.4 738.5 706.5 741.5 706.8 744.0C707.0 746.5 707.3 748.6 707.7 750.0C708.1 751.4 708.7 752.2 709.2 752.2C709.8 752.2 710.3 751.2 711.0 750.0C711.7 748.8 712.5 746.5 713.2 744.8C714.0 743.0 714.8 741.6 715.5 739.5C716.2 737.4 717.0 734.8 717.8 732.0C718.5 729.2 719.2 725.6 720.0 723.0C720.8 720.4 721.5 717.7 722.2 716.2C723.0 714.8 723.6 714.5 724.5 714.3C725.4 714.1 726.2 714.8 727.5 715.2C728.8 715.6 730.2 716.3 732.0 716.7C733.8 717.1 736.0 717.4 738.0 717.5C740.0 717.5 742.0 717.1 744.0 717.0C746.0 716.9 748.0 716.9 750.0 717.0C752.0 717.1 754.2 717.8 756.0 717.8C757.8 717.7 759.5 716.6 760.5 716.7C761.5 716.8 761.5 717.2 762.0 718.5C762.5 719.8 763.0 722.6 763.5 724.5C764.0 726.4 764.5 729.2 765.0 729.8C765.5 730.2 765.8 729.1 766.2 727.5C766.7 725.9 767.2 722.4 767.7 720.0C768.2 717.6 768.8 714.9 769.5 713.2C770.2 711.6 770.9 710.9 771.8 710.2C772.6 709.6 773.9 709.4 774.8 709.5C775.6 709.6 776.4 709.8 777.0 711.0C777.6 712.2 778.0 714.8 778.5 717.0C779.0 719.2 779.2 723.0 779.7 724.5C780.2 726.0 780.7 726.8 781.2 726.0C781.7 725.2 782.2 722.1 782.7 720.0C783.2 717.9 783.7 714.8 784.5 713.2C785.3 711.8 786.4 711.6 787.5 711.0C788.6 710.4 790.1 710.0 791.2 709.5C792.4 709.0 793.4 708.3 794.2 708.0C795.1 707.7 795.8 707.5 796.5 707.7C797.2 708.0 798.0 708.5 798.8 709.5C799.5 710.5 800.3 712.1 801.0 714.0C801.7 715.9 802.2 719.0 802.8 720.8C803.4 722.5 803.8 724.0 804.8 724.8C805.7 725.5 807.2 725.1 808.5 725.2C809.8 725.4 811.2 725.2 812.2 725.5C813.2 725.9 813.8 726.4 814.5 727.5C815.2 728.6 816.0 730.5 816.8 732.0C817.5 733.5 818.2 735.4 819.0 736.5C819.8 737.6 820.5 738.8 821.2 738.8C822.0 738.8 822.6 737.3 823.5 736.5C824.4 735.7 825.4 734.4 826.5 733.8C827.6 733.2 829.0 732.8 830.2 732.8C831.5 732.7 832.9 733.2 834.0 733.5C835.1 733.8 836.2 734.8 837.0 734.2C837.8 733.8 838.3 731.5 838.8 730.5C839.3 729.5 839.4 728.8 840.0 728.2C840.6 727.8 841.5 727.2 842.2 727.5C843.0 727.8 843.6 729.2 844.5 730.2C845.4 731.2 846.4 732.7 847.5 733.2C848.6 733.8 850.2 733.7 851.2 733.5C852.2 733.3 852.9 733.0 853.5 732.0C854.1 731.0 854.5 728.6 855.0 727.5C855.5 726.4 856.2 725.4 856.8 725.2C857.4 725.1 858.2 725.8 858.8 726.8C859.3 727.8 859.7 729.9 860.2 731.2C860.8 732.6 861.7 735.1 862.2 735.0C862.7 734.9 862.9 732.8 863.2 730.5C863.6 728.2 863.9 723.8 864.3 721.5C864.7 719.2 865.2 717.9 865.8 717.0C866.4 716.1 867.0 716.1 867.8 716.2C868.5 716.4 869.2 717.2 870.0 717.8C870.8 718.2 871.6 719.5 872.2 719.2C872.9 719.0 873.1 717.2 873.8 716.2C874.4 715.2 875.1 713.9 876.0 713.2C876.9 712.6 878.0 712.4 879.0 712.5C880.0 712.6 881.1 712.8 882.0 713.7C882.9 714.6 883.6 716.5 884.2 717.8C884.9 719.0 885.0 720.8 885.8 721.5C886.5 722.2 887.6 722.2 888.8 722.2C889.9 722.2 891.2 721.8 892.5 721.5C893.8 721.2 895.2 720.4 896.2 720.3C897.2 720.2 897.9 720.0 898.5 720.8C899.1 721.5 899.3 722.6 899.7 724.5C900.1 726.4 900.3 729.6 900.8 732.0C901.2 734.4 901.8 737.5 902.2 738.8C902.8 740.0 903.2 739.6 903.8 739.2C904.2 738.8 904.6 737.8 905.2 736.5C905.9 735.2 906.8 732.9 907.5 731.2C908.2 729.6 909.0 728.0 909.8 726.8C910.5 725.5 911.3 724.2 912.0 723.8C912.7 723.2 913.2 723.1 913.8 723.8C914.3 724.4 914.8 725.9 915.3 727.5C915.8 729.1 916.3 732.2 916.8 733.5C917.3 734.8 917.7 735.1 918.3 735.0C918.9 734.9 919.5 733.8 920.2 732.8C921.0 731.8 921.6 730.4 922.5 729.0C923.4 727.6 924.5 725.6 925.5 724.5C926.5 723.4 927.8 722.7 928.5 722.5C929.2 722.4 929.6 722.7 930.0 723.8C930.4 724.8 930.7 727.2 931.0 729.0C931.4 730.8 931.7 732.8 932.2 734.2C932.8 735.7 933.6 737.2 934.5 737.7C935.4 738.2 936.6 738.0 937.5 737.2C938.4 736.5 939.0 735.1 939.8 733.5C940.5 731.9 941.2 728.8 942.0 727.5C942.8 726.2 943.5 725.7 944.2 725.7C945.0 725.7 945.6 726.7 946.5 727.5C947.4 728.3 948.2 729.8 949.5 730.5C950.8 731.2 952.9 731.8 954.0 731.7C955.1 731.6 955.5 730.7 956.2 729.8C957.0 728.8 957.9 726.7 958.5 726.0C959.1 725.3 959.5 725.2 960.0 725.7C960.5 726.2 960.8 727.0 961.2 729.0C961.6 731.0 961.9 734.8 962.2 738.0C962.6 741.2 962.9 745.5 963.3 748.5C963.7 751.5 964.2 753.5 964.8 756.0C965.4 758.5 966.0 761.9 966.8 763.5C967.5 765.1 968.4 765.8 969.0 765.8C969.6 765.8 970.0 765.4 970.5 763.5C971.0 761.6 971.3 757.8 971.7 754.5C972.1 751.2 972.4 746.8 972.8 744.0C973.1 741.2 973.6 739.0 974.0 738.0C974.3 737.0 974.6 737.3 975.0 737.7C975.4 738.1 975.9 738.8 976.5 740.2C977.1 741.7 978.0 744.1 978.8 746.2C979.5 748.4 980.1 750.6 980.7 753.0C981.3 755.4 981.9 758.8 982.5 760.5C983.1 762.2 983.8 763.2 984.3 763.2C984.8 763.2 985.3 762.5 985.8 760.5C986.2 758.5 986.7 755.0 987.0 751.5C987.3 748.0 987.5 743.2 987.8 739.5C988.0 735.8 988.1 731.5 988.5 729.0C988.9 726.5 989.2 725.5 990.0 724.5C990.8 723.5 992.0 723.8 993.0 723.0C994.0 722.2 995.0 721.0 996.0 720.0C997.0 719.0 998.0 717.9 999.0 717.0C1000.0 716.1 1001.0 715.4 1002.0 714.8C1003.0 714.1 1004.1 713.2 1005.0 713.2C1005.9 713.2 1006.5 713.9 1007.2 714.8C1008.0 715.6 1008.6 717.2 1009.5 718.5C1010.4 719.8 1011.6 721.4 1012.5 722.2C1013.4 723.1 1014.1 723.9 1014.8 723.8C1015.4 723.6 1015.8 722.5 1016.2 721.5C1016.8 720.5 1017.1 718.8 1017.8 717.8C1018.4 716.8 1019.2 715.8 1020.0 715.5C1020.8 715.2 1021.4 715.5 1022.2 716.2C1023.1 717.0 1024.2 718.5 1025.2 720.0C1026.2 721.5 1027.2 724.1 1028.2 725.2C1029.2 726.4 1030.2 726.8 1031.2 726.8C1032.2 726.7 1033.4 725.1 1034.2 724.8C1035.1 724.5 1035.8 724.2 1036.5 724.8C1037.2 725.4 1038.0 726.7 1038.8 728.2C1039.5 729.8 1040.3 732.0 1041.0 734.2C1041.7 736.5 1042.2 739.2 1042.8 741.8C1043.3 744.2 1043.8 747.8 1044.3 749.2C1044.8 750.8 1045.3 750.9 1045.8 750.8C1046.3 750.6 1046.9 750.1 1047.3 748.5C1047.7 746.9 1047.9 743.5 1048.2 741.0C1048.5 738.5 1048.8 735.6 1049.2 733.5C1049.7 731.4 1050.1 729.5 1050.8 728.2C1051.4 727.0 1052.1 726.5 1053.0 726.0C1053.9 725.5 1055.2 726.2 1056.0 725.2C1056.8 724.2 1057.0 721.6 1057.5 720.0C1058.0 718.4 1058.4 716.6 1059.0 715.8C1059.6 715.0 1060.4 715.0 1061.2 715.2C1062.1 715.4 1063.1 716.6 1064.2 717.0C1065.4 717.4 1066.4 717.3 1068.0 717.3C1069.6 717.2 1072.2 717.0 1074.0 716.7C1075.8 716.5 1077.5 716.0 1078.5 715.8C1079.5 715.5 1079.2 715.2 1080.0 715.2C1080.8 715.2 1082.2 714.8 1083.0 715.5C1083.8 716.2 1084.2 717.9 1084.8 719.2C1085.3 720.6 1085.8 723.6 1086.3 723.8C1086.8 723.9 1087.3 721.6 1087.8 720.0C1088.3 718.4 1088.6 715.4 1089.3 714.0C1090.0 712.6 1090.9 712.0 1091.7 711.8C1092.5 711.5 1093.5 711.7 1094.2 712.2C1095.0 712.7 1095.8 713.6 1096.5 714.8C1097.2 715.9 1098.0 717.5 1098.8 719.2C1099.5 721.0 1100.1 723.5 1101.0 725.2C1101.9 727.0 1103.0 728.7 1104.0 729.8C1105.0 730.8 1106.0 731.6 1107.0 731.7C1108.0 731.8 1108.9 731.3 1110.0 730.5C1111.1 729.7 1112.6 727.9 1113.8 726.8C1114.9 725.6 1115.8 725.0 1116.8 723.8C1117.7 722.5 1118.5 720.8 1119.3 719.2C1120.1 717.8 1120.9 716.1 1121.7 714.8C1122.5 713.4 1123.3 712.0 1124.2 711.3C1125.2 710.5 1126.2 710.3 1127.2 710.2C1128.2 710.2 1129.1 710.6 1130.2 711.0C1131.4 711.4 1132.6 712.0 1134.0 712.8C1135.4 713.5 1137.0 714.6 1138.5 715.5C1140.0 716.4 1141.6 717.5 1143.0 718.2C1144.4 719.0 1145.5 719.2 1146.8 720.0C1148.0 720.8 1149.2 721.8 1150.5 723.0C1151.8 724.2 1153.0 726.2 1154.2 727.5C1155.5 728.8 1156.8 729.7 1158.0 730.5C1159.2 731.3 1160.4 732.0 1161.8 732.3C1163.1 732.5 1165.1 732.3 1166.2 732.0C1167.4 731.7 1167.8 731.8 1168.5 730.5C1169.2 729.2 1170.0 726.5 1170.8 724.5C1171.5 722.5 1172.2 720.2 1173.0 718.5C1173.8 716.8 1174.5 715.1 1175.2 714.0C1176.0 712.9 1176.8 712.1 1177.5 711.8C1178.2 711.4 1178.9 711.7 1179.8 712.0C1180.6 712.4 1181.6 713.5 1182.8 714.0C1183.9 714.5 1185.5 715.1 1186.5 715.2C1187.5 715.3 1188.0 715.6 1188.8 714.8C1189.5 713.9 1190.2 711.4 1191.0 710.2C1191.8 709.1 1192.5 708.2 1193.2 708.0C1194.0 707.8 1194.8 707.9 1195.5 708.8C1196.2 709.6 1196.7 711.4 1197.3 713.2C1197.9 715.1 1198.7 717.4 1199.2 720.0C1199.8 722.6 1200.2 726.4 1200.8 729.0C1201.2 731.6 1201.8 734.3 1202.2 735.8C1202.8 737.2 1203.2 737.7 1203.8 737.7C1204.2 737.7 1204.8 737.1 1205.2 735.8C1205.8 734.4 1206.1 731.4 1206.8 729.8C1207.4 728.1 1208.1 726.9 1209.0 726.0C1209.9 725.1 1211.1 724.8 1212.0 724.5C1212.9 724.2 1213.6 724.7 1214.2 724.2C1214.9 723.7 1215.2 723.0 1215.8 721.5C1216.2 720.0 1216.8 717.0 1217.2 715.5C1217.8 714.0 1218.0 713.4 1218.8 712.8C1219.5 712.2 1220.8 711.9 1221.8 711.8C1222.8 711.6 1223.8 711.5 1224.8 711.8C1225.8 712.0 1226.8 712.8 1227.8 713.2C1228.8 713.7 1229.4 714.2 1230.8 714.3C1232.1 714.4 1234.5 714.1 1236.0 714.0C1237.5 713.9 1238.8 713.9 1239.8 713.5C1240.8 713.2 1241.2 712.5 1242.0 711.8C1242.8 711.0 1243.4 709.5 1244.2 708.8C1245.1 708.0 1246.2 707.8 1247.2 707.2C1248.2 706.8 1249.2 706.6 1250.2 705.8C1251.2 704.9 1252.4 703.6 1253.2 702.0C1254.1 700.4 1254.8 698.2 1255.5 696.0C1256.2 693.8 1257.0 690.5 1257.8 688.5C1258.5 686.5 1259.1 684.7 1259.7 684.0C1260.3 683.3 1260.9 683.7 1261.5 684.5C1262.1 685.2 1262.7 686.7 1263.3 688.5C1263.9 690.3 1264.6 692.9 1265.2 695.2C1265.9 697.6 1266.6 700.7 1267.2 702.8C1267.8 704.8 1268.2 706.7 1268.7 707.7C1269.2 708.7 1269.8 709.0 1270.5 708.8C1271.2 708.5 1272.0 707.1 1272.8 706.5C1273.5 705.9 1274.1 705.4 1275.0 705.3C1275.9 705.2 1277.0 705.7 1278.0 705.8C1279.0 705.8 1280.1 706.0 1281.0 705.5C1281.9 705.0 1282.5 703.5 1283.2 702.8C1284.0 702.0 1284.6 701.1 1285.2 701.2C1285.8 701.4 1286.5 702.7 1287.0 703.5C1287.5 704.3 1287.9 705.7 1288.5 706.2C1289.1 706.8 1289.9 707.1 1290.8 706.8C1291.6 706.5 1292.8 705.2 1293.8 704.2C1294.8 703.3 1295.8 702.1 1296.8 701.2C1297.8 700.4 1298.9 699.3 1299.8 699.0C1300.6 698.7 1301.1 698.8 1301.7 699.3C1302.3 699.8 1303.0 701.3 1303.5 702.0C1304.0 702.7 1304.4 703.4 1305.0 703.5C1305.6 703.6 1306.4 703.3 1307.2 702.8C1308.1 702.2 1309.4 700.6 1310.2 700.2C1311.1 699.8 1311.5 700.0 1312.2 700.5C1313.0 701.0 1314.0 702.9 1314.8 703.5C1315.5 704.1 1316.3 704.6 1317.0 704.2C1317.7 703.9 1318.3 702.4 1318.8 701.2C1319.3 700.1 1319.4 699.1 1320.0 697.5C1320.6 695.9 1321.5 693.5 1322.2 691.5C1323.0 689.5 1323.8 686.8 1324.5 685.5C1325.2 684.2 1325.7 683.8 1326.3 684.0C1326.9 684.2 1327.5 685.9 1328.2 687.0C1329.0 688.1 1329.5 689.8 1330.5 690.8C1331.5 691.8 1333.0 692.4 1334.2 693.0C1335.5 693.6 1336.6 694.1 1338.0 694.5C1339.4 694.9 1341.2 695.4 1342.5 695.2C1343.8 695.1 1344.8 694.9 1345.5 693.8C1346.2 692.6 1346.5 691.6 1347.0 688.5C1347.5 685.4 1347.9 679.7 1348.5 675.0C1349.1 670.3 1349.6 669.2 1350.3 660.0C1351.1 650.9 1352.0 632.2 1352.8 620.0C1353.5 607.8 1354.4 594.4 1355.0 587.0C1355.6 579.6 1356.0 577.6 1356.5 575.8C1357.0 573.9 1357.5 573.9 1358.0 575.8C1358.5 577.6 1358.8 579.6 1359.2 587.0C1359.6 594.4 1359.9 607.8 1360.2 620.0C1360.6 632.2 1361.0 648.4 1361.5 660.0C1361.9 671.7 1362.3 683.5 1362.8 690.0C1363.2 696.5 1363.6 696.9 1364.2 699.0C1364.9 701.1 1365.4 702.0 1366.5 702.8C1367.6 703.5 1369.5 703.4 1371.0 703.5C1372.5 703.6 1374.0 703.5 1375.5 703.5C1377.0 703.5 1378.9 703.7 1380.0 703.2C1381.1 702.7 1381.6 702.0 1382.2 700.5C1382.9 699.0 1383.2 697.1 1383.8 694.5C1384.2 691.9 1384.7 687.0 1385.2 684.8C1385.8 682.5 1386.5 681.8 1387.2 681.3C1387.9 680.8 1388.5 681.2 1389.3 681.8C1390.1 682.3 1391.2 683.5 1392.0 684.8C1392.8 686.0 1393.5 687.5 1394.2 689.2C1395.0 691.0 1395.9 694.1 1396.5 695.2C1397.1 696.4 1397.2 697.2 1397.7 696.3C1398.2 695.4 1398.7 692.8 1399.2 690.0C1399.8 687.2 1400.2 682.9 1401.0 679.5C1401.8 676.1 1402.9 672.9 1403.8 669.5C1404.6 666.1 1405.3 661.4 1406.0 659.0C1406.7 656.6 1407.2 655.5 1407.8 655.2C1408.3 655.0 1408.8 654.9 1409.3 657.5C1409.8 660.1 1410.3 668.1 1410.5 671.0C1410.7 673.9 1410.5 671.3 1410.8 675.0C1411.0 678.7 1411.4 689.2 1411.8 693.0C1412.2 696.8 1412.6 696.6 1413.3 697.5C1414.0 698.4 1414.9 698.2 1416.0 698.2C1417.1 698.3 1418.8 698.4 1419.8 697.8C1420.8 697.2 1421.4 697.0 1422.0 694.5C1422.6 692.0 1423.0 687.0 1423.5 682.5C1424.0 678.0 1424.7 672.4 1425.0 667.5C1425.3 662.6 1424.9 658.4 1425.2 653.0C1425.5 647.6 1426.2 638.8 1426.7 635.0C1427.2 631.2 1427.7 630.7 1428.2 630.2C1428.8 629.7 1429.5 630.2 1430.0 632.0C1430.5 633.8 1431.0 636.8 1431.5 641.0C1432.0 645.2 1432.7 651.8 1433.3 657.5C1433.9 663.2 1434.7 669.6 1435.2 675.0C1435.7 680.4 1435.8 685.2 1436.4 690.0C1437.0 694.8 1437.8 700.4 1438.8 703.5C1439.8 706.6 1441.5 707.2 1442.7 708.8C1443.9 710.2 1445.0 711.6 1446.0 712.5C1447.0 713.4 1447.9 714.2 1449.0 714.3C1450.1 714.4 1451.2 713.7 1452.8 713.2C1454.2 712.8 1456.4 712.0 1458.0 711.5C1459.6 710.9 1461.3 710.3 1462.5 710.0C1463.7 709.6 1464.5 709.2 1465.2 709.5C1466.0 709.8 1466.5 710.7 1467.0 711.8C1467.5 712.8 1468.0 715.3 1468.5 715.8C1469.0 716.3 1469.5 715.7 1470.0 714.8C1470.5 713.8 1471.0 711.4 1471.5 710.2C1472.0 709.1 1472.2 708.2 1473.0 707.7C1473.8 707.2 1474.8 707.5 1476.0 707.2C1477.2 707.0 1479.1 706.9 1480.5 706.5C1481.9 706.1 1483.0 705.1 1484.2 704.7C1485.5 704.3 1486.6 704.4 1488.0 704.2C1489.4 704.1 1491.1 703.9 1492.5 703.8C1493.9 703.7 1495.2 703.6 1496.2 703.8C1497.2 703.9 1497.9 704.2 1498.5 704.7C1499.1 705.2 1499.8 706.2 1500.0 706.5L1500.0 744.0 L127.5 744.0 Z"/></defs>
<use href="#yp" fill="none" stroke="#e8c15c" stroke-width="1.3" stroke-linejoin="round"/>
<use href="#ar" fill="#61bdad" fill-opacity=".9" clip-path="url(#cu)"/>
<use href="#ar" fill="#f6616b" clip-path="url(#cd)"/>
<use href="#gp" fill="none" stroke="#3a9d8b" stroke-width="1.4" stroke-linejoin="round" clip-path="url(#cu)"/>
<use href="#gp" fill="none" stroke="#dc4a58" stroke-width="1.4" stroke-linejoin="round" clip-path="url(#cd)"/>
<use href="#yp" fill="none" stroke="#e8c15c" stroke-width="1.3" stroke-linejoin="round" opacity=".62"/>
<rect x="817" y="799" width="688.5" height="67" fill="#e9ebfb"/>
<defs><clipPath id="sl"><rect x="0" y="790" width="817" height="90"/></clipPath><clipPath id="sr"><rect x="817" y="790" width="700" height="90"/></clipPath><path id="sa" d="M127.7 822.8L134.0 823.1L142.8 821.7L151.5 823.1L158.5 826.2L162.7 828.0L168.3 836.8L173.2 831.5L176.0 835.0L178.8 832.9L183.0 835.0L188.2 836.8L191.8 836.0L195.2 839.2L198.8 840.2L202.2 836.0L207.5 837.5L214.5 836.0L221.5 837.5L228.5 836.8L232.0 835.0L237.2 837.1L242.5 835.7L247.8 836.0L254.8 830.8L263.5 829.4L274.0 830.8L281.0 832.9L286.2 834.3L291.5 834.0L295.7 830.5L302.0 831.9L310.8 833.2L321.2 833.6L326.5 834.0L331.8 836.8L337.0 843.0L342.2 839.5L347.5 841.3L352.8 842.4L357.3 842.0L360.1 845.5L363.2 843.4L370.2 843.0L374.8 841.3L378.3 831.5L380.4 826.2L383.2 830.8L386.7 835.0L390.2 838.5L396.5 836.0L403.5 835.4L409.1 832.9L414.0 835.0L419.2 837.8L428.0 839.2L433.2 843.0L436.8 842.0L442.0 845.5L447.2 843.8L456.0 842.0L466.5 840.2L477.0 837.1L484.0 838.5L487.5 840.2L494.5 839.2L501.5 840.6L505.0 839.2L508.5 834.3L513.8 836.0L522.5 837.5L533.0 837.8L547.0 836.0L557.5 836.4L566.2 838.5L571.5 839.2L576.8 842.0L583.8 843.8L590.8 843.0L597.8 844.5L606.5 843.8L613.5 843.0L618.8 845.5L624.0 845.9L631.0 844.1L641.5 843.4L646.8 845.5L651.3 853.2L654.8 849.0L660.8 849.7L666.0 850.8L671.2 845.5L676.5 847.2L680.0 846.5L687.0 845.5L694.0 842.7L701.0 843.8L713.2 843.4L722.0 845.5L732.5 844.8L743.0 845.5L753.5 844.5L764.0 844.1L772.8 841.0L781.5 842.7L792.0 842.0L806.0 842.0L816.5 841.3L827.0 842.0L837.5 841.3L848.0 842.4L862.0 842.4L876.0 844.5L886.5 842.7L897.0 838.5L907.5 836.8L912.8 837.8L921.5 834.0L926.8 835.0L935.5 833.2L946.0 836.0L956.5 837.8L967.0 836.8L974.0 839.2L984.5 838.5L995.0 837.5L1005.5 837.8L1012.5 839.9L1023.0 839.5L1033.5 840.2L1044.0 840.6L1054.5 841.3L1065.0 843.4L1079.0 843.0L1089.5 842.0L1100.0 841.6L1110.5 844.1L1121.0 842.4L1131.5 841.3L1142.0 839.9L1152.5 840.2L1163.0 842.7L1177.0 843.4L1191.0 841.0L1201.5 842.7L1245.6 843.5L1256.1 843.0L1264.0 843.0L1271.9 844.6L1282.4 843.0L1292.9 842.5L1300.8 842.0L1308.6 843.0L1319.1 841.4L1329.6 842.0L1340.1 841.4L1350.6 839.9L1358.5 839.9L1366.4 838.3L1374.2 835.6L1379.5 832.5L1382.1 829.4L1386.1 830.4L1390.0 831.5L1395.2 828.8L1400.5 827.2L1404.4 825.1L1409.7 827.2L1414.9 826.2L1420.2 824.6L1425.4 820.7L1430.7 814.1L1435.9 815.7L1441.2 814.1L1446.4 814.6L1453.0 813.6L1458.2 811.5L1463.5 813.6L1468.8 812.5L1472.7 816.8L1476.6 820.7L1479.2 823.3L1481.9 820.7L1485.8 822.0L1489.8 824.1L1493.7 822.0L1498.9 821.0L1505.5 820.7L1505.5 866.0L127.7 866.0Z"/></defs>
<use href="#sa" fill="#e3e7f4" clip-path="url(#sl)"/><use href="#sa" fill="#d6dcf6" clip-path="url(#sr)"/>
<path d="M127.7 822.8L134.0 823.1L142.8 821.7L151.5 823.1L158.5 826.2L162.7 828.0L168.3 836.8L173.2 831.5L176.0 835.0L178.8 832.9L183.0 835.0L188.2 836.8L191.8 836.0L195.2 839.2L198.8 840.2L202.2 836.0L207.5 837.5L214.5 836.0L221.5 837.5L228.5 836.8L232.0 835.0L237.2 837.1L242.5 835.7L247.8 836.0L254.8 830.8L263.5 829.4L274.0 830.8L281.0 832.9L286.2 834.3L291.5 834.0L295.7 830.5L302.0 831.9L310.8 833.2L321.2 833.6L326.5 834.0L331.8 836.8L337.0 843.0L342.2 839.5L347.5 841.3L352.8 842.4L357.3 842.0L360.1 845.5L363.2 843.4L370.2 843.0L374.8 841.3L378.3 831.5L380.4 826.2L383.2 830.8L386.7 835.0L390.2 838.5L396.5 836.0L403.5 835.4L409.1 832.9L414.0 835.0L419.2 837.8L428.0 839.2L433.2 843.0L436.8 842.0L442.0 845.5L447.2 843.8L456.0 842.0L466.5 840.2L477.0 837.1L484.0 838.5L487.5 840.2L494.5 839.2L501.5 840.6L505.0 839.2L508.5 834.3L513.8 836.0L522.5 837.5L533.0 837.8L547.0 836.0L557.5 836.4L566.2 838.5L571.5 839.2L576.8 842.0L583.8 843.8L590.8 843.0L597.8 844.5L606.5 843.8L613.5 843.0L618.8 845.5L624.0 845.9L631.0 844.1L641.5 843.4L646.8 845.5L651.3 853.2L654.8 849.0L660.8 849.7L666.0 850.8L671.2 845.5L676.5 847.2L680.0 846.5L687.0 845.5L694.0 842.7L701.0 843.8L713.2 843.4L722.0 845.5L732.5 844.8L743.0 845.5L753.5 844.5L764.0 844.1L772.8 841.0L781.5 842.7L792.0 842.0L806.0 842.0L816.5 841.3L827.0 842.0L837.5 841.3L848.0 842.4L862.0 842.4L876.0 844.5L886.5 842.7L897.0 838.5L907.5 836.8L912.8 837.8L921.5 834.0L926.8 835.0L935.5 833.2L946.0 836.0L956.5 837.8L967.0 836.8L974.0 839.2L984.5 838.5L995.0 837.5L1005.5 837.8L1012.5 839.9L1023.0 839.5L1033.5 840.2L1044.0 840.6L1054.5 841.3L1065.0 843.4L1079.0 843.0L1089.5 842.0L1100.0 841.6L1110.5 844.1L1121.0 842.4L1131.5 841.3L1142.0 839.9L1152.5 840.2L1163.0 842.7L1177.0 843.4L1191.0 841.0L1201.5 842.7L1245.6 843.5L1256.1 843.0L1264.0 843.0L1271.9 844.6L1282.4 843.0L1292.9 842.5L1300.8 842.0L1308.6 843.0L1319.1 841.4L1329.6 842.0L1340.1 841.4L1350.6 839.9L1358.5 839.9L1366.4 838.3L1374.2 835.6L1379.5 832.5L1382.1 829.4L1386.1 830.4L1390.0 831.5L1395.2 828.8L1400.5 827.2L1404.4 825.1L1409.7 827.2L1414.9 826.2L1420.2 824.6L1425.4 820.7L1430.7 814.1L1435.9 815.7L1441.2 814.1L1446.4 814.6L1453.0 813.6L1458.2 811.5L1463.5 813.6L1468.8 812.5L1472.7 816.8L1476.6 820.7L1479.2 823.3L1481.9 820.7L1485.8 822.0L1489.8 824.1L1493.7 822.0L1498.9 821.0L1505.5 820.7" fill="none" stroke="#8ea1d2" stroke-width="1.200" stroke-linejoin="round"/>
<rect x="808.8" y="824.5" width="16.5" height="19.5" rx="4.5" fill="#2b2e45"/>
<path d="M815.2 830.5v7.5M818.8 830.5v7.5" stroke="#dfe3f3" stroke-width="1.2" fill="none"/>
<rect x="1495.8" y="824.5" width="16.5" height="19.5" rx="4.5" fill="#2b2e45"/>
<path d="M1502.2 830.5v7.5M1505.8 830.5v7.5" stroke="#dfe3f3" stroke-width="1.2" fill="none"/>
</svg>
<div class="ax r" style="left:16px;width:100px;top:542.0px;transform:scaleX(.9);transform-origin:100% 50%">0.0600%</div>
<div class="ax r" style="left:16px;width:100px;top:574.3px;transform:scaleX(.9);transform-origin:100% 50%">0.0500%</div>
<div class="ax r" style="left:16px;width:100px;top:606.6px;transform:scaleX(.9);transform-origin:100% 50%">0.0400%</div>
<div class="ax r" style="left:16px;width:100px;top:638.9px;transform:scaleX(.9);transform-origin:100% 50%">0.0300%</div>
<div class="ax r" style="left:16px;width:100px;top:671.2px;transform:scaleX(.9);transform-origin:100% 50%">0.0200%</div>
<div class="ax r" style="left:16px;width:100px;top:703.5px;transform:scaleX(.9);transform-origin:100% 50%">0.0100%</div>
<div class="ax r" style="left:16px;width:100px;top:735.8px;transform:scaleX(.9);transform-origin:100% 50%">0%</div>
<div class="ax r" style="left:16px;width:100px;top:768.1px;transform:scaleX(.9);transform-origin:100% 50%">-0.0100%</div>
<div class="ax" style="left:1511.5px;top:541.5px;transform:scaleX(.92);transform-origin:0 50%">$3.97</div>
<div class="ax" style="left:1511.5px;top:589.4px;transform:scaleX(.92);transform-origin:0 50%">$3.50</div>
<div class="ax" style="left:1511.5px;top:639.5px;transform:scaleX(.92);transform-origin:0 50%">$3.00</div>
<div class="ax" style="left:1511.5px;top:690.0px;transform:scaleX(.92);transform-origin:0 50%">$2.50</div>
<div class="ax" style="left:1511.5px;top:740.5px;transform:scaleX(.92);transform-origin:0 50%">$2.00</div>
<div class="ax" style="left:1511.5px;top:767.0px;transform:scaleX(.92);transform-origin:0 50%">$1.74</div>
<div class="ax" style="left:113.0px;width:80px;text-align:center;top:783px;transform:scaleX(.92)">30 Apr</div>
<div class="ax" style="left:169.1px;width:80px;text-align:center;top:783px;transform:scaleX(.92)">4 May</div>
<div class="ax" style="left:225.2px;width:80px;text-align:center;top:783px;transform:scaleX(.92)">8 May</div>
<div class="ax" style="left:281.4px;width:80px;text-align:center;top:783px;transform:scaleX(.92)">11 May</div>
<div class="ax" style="left:337.5px;width:80px;text-align:center;top:783px;transform:scaleX(.92)">15 May</div>
<div class="ax" style="left:393.6px;width:80px;text-align:center;top:783px;transform:scaleX(.92)">19 May</div>
<div class="ax" style="left:449.7px;width:80px;text-align:center;top:783px;transform:scaleX(.92)">22 May</div>
<div class="ax" style="left:505.8px;width:80px;text-align:center;top:783px;transform:scaleX(.92)">26 May</div>
<div class="ax" style="left:562.0px;width:80px;text-align:center;top:783px;transform:scaleX(.92)">30 May</div>
<div class="ax" style="left:618.1px;width:80px;text-align:center;top:783px;transform:scaleX(.92)">2 Jun</div>
<div class="ax" style="left:674.2px;width:80px;text-align:center;top:783px;transform:scaleX(.92)">6 Jun</div>
<div class="ax" style="left:730.3px;width:80px;text-align:center;top:783px;transform:scaleX(.92)">10 Jun</div>
<div class="ax" style="left:786.4px;width:80px;text-align:center;top:783px;transform:scaleX(.92)">13 Jun</div>
<div class="ax" style="left:842.6px;width:80px;text-align:center;top:783px;transform:scaleX(.92)">17 Jun</div>
<div class="ax" style="left:898.7px;width:80px;text-align:center;top:783px;transform:scaleX(.92)">21 Jun</div>
<div class="ax" style="left:954.8px;width:80px;text-align:center;top:783px;transform:scaleX(.92)">24 Jun</div>
<div class="ax" style="left:1010.9px;width:80px;text-align:center;top:783px;transform:scaleX(.92)">28 Jun</div>
<div class="ax" style="left:1067.0px;width:80px;text-align:center;top:783px;transform:scaleX(.92)">2 Jul</div>
<div class="ax" style="left:1123.2px;width:80px;text-align:center;top:783px;transform:scaleX(.92)">5 Jul</div>
<div class="ax" style="left:1179.3px;width:80px;text-align:center;top:783px;transform:scaleX(.92)">9 Jul</div>
<div class="ax" style="left:1235.4px;width:80px;text-align:center;top:783px;transform:scaleX(.92)">13 Jul</div>
<div class="ax" style="left:1291.5px;width:80px;text-align:center;top:783px;transform:scaleX(.92)">16 Jul</div>
<div class="ax" style="left:1347.6px;width:80px;text-align:center;top:783px;transform:scaleX(.92)">20 Jul</div>
<div class="ax" style="left:1403.8px;width:80px;text-align:center;top:783px;transform:scaleX(.92)">24 Jul</div>
<div class="ax" style="left:1459.9px;width:80px;text-align:center;top:783px;transform:scaleX(.92)">27 Jul</div>
<div class="abs" style="left:1564.7px;top:791px;width:40px;height:36px;border-radius:6px;background:#eff0f4"></div>
<div class="abs" style="left:1564.7px;top:833px;width:40px;height:36.4px;border-radius:6px;background:#eff0f4"></div>
<svg class="abs" style="left:1560px;top:790px" width="40" height="82" viewBox="1560 790 40 82"><path d="M1581.9 799.1L1583.9 801.1L1586.7 800.4L1587.5 803.1L1590.2 803.9L1589.5 806.7L1591.5 808.7L1589.5 810.7L1590.2 813.5L1587.5 814.3L1586.7 817.0L1583.9 816.3L1581.9 818.3L1579.9 816.3L1577.1 817.0L1576.3 814.3L1573.6 813.5L1574.3 810.7L1572.3 808.7L1574.3 806.7L1573.6 803.9L1576.3 803.1L1577.1 800.4L1579.9 801.1Z" fill="none" stroke="#24272d" stroke-width="2" stroke-linejoin="round"/><path d="M1581.900 804.400v5.900" stroke="#24272d" stroke-width="2" stroke-linecap="round"/><circle cx="1581.900" cy="813.500" r="1.250" fill="#24272d"/><path d="M1576.400 853.700l5.500-5.200 5.500 5.200" fill="none" stroke="#24272d" stroke-width="2.300" stroke-linecap="round" stroke-linejoin="round"/></svg>
<div class="abs" style="left:640px;top:891px;width:330px;height:10px;border-radius:10px;box-shadow:0 0 18px 8px rgba(0,0,0,.09)"></div>
</body>
</html>
